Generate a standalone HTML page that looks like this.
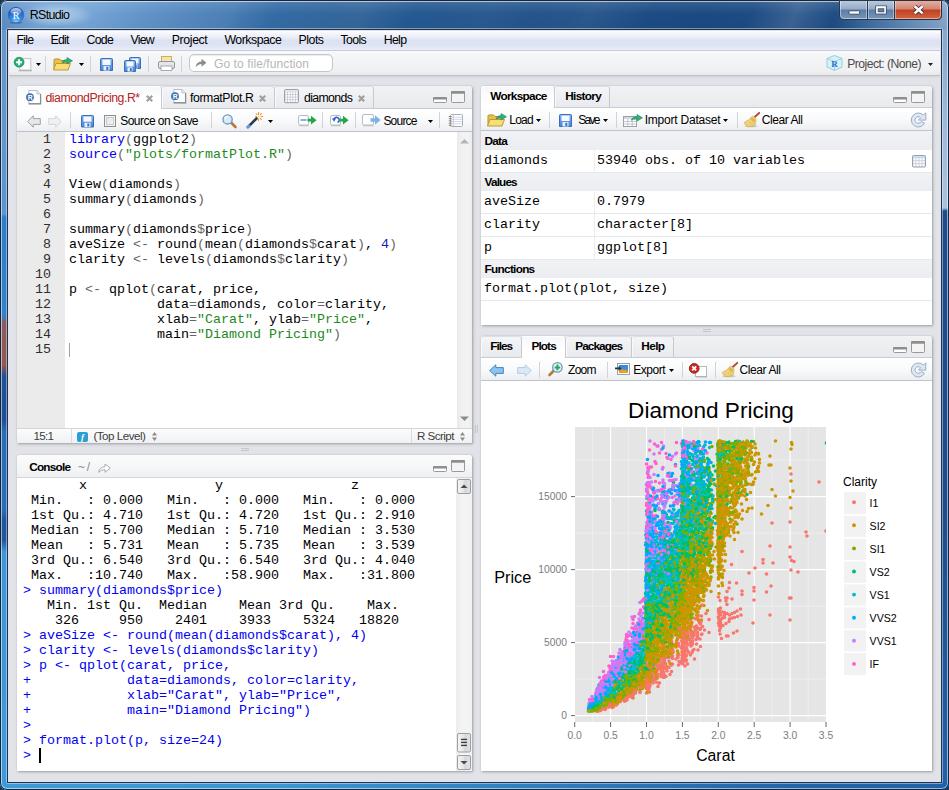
<!DOCTYPE html>
<html><head><meta charset="utf-8">
<style>
*{box-sizing:border-box;margin:0;padding:0}
html,body{width:949px;height:790px;overflow:hidden;background:#1d3552}
body{font-family:"Liberation Sans",sans-serif;font-size:12px;color:#000;position:relative}
.m{position:absolute;font-family:"Liberation Mono",monospace;font-size:13.33px;line-height:15px;white-space:pre;letter-spacing:0}
.kw{color:#0000f0}.st{color:#1d8a1d}.nu{color:#1a1ab8}.op{color:#666}.pr{color:#686868}
.cin{color:#0000f2}
</style></head><body>
<div id="frame" style="position:absolute;left:0;top:0;width:949px;height:790px;border-radius:7px;overflow:hidden;background:#2565a8">
<div style="position:absolute;left:0px;top:0px;width:949px;height:30px;background:linear-gradient(90deg,#5d8ec4 0px,#78a6d6 40px,#79a8d8 80px,#5f92c8 150px,#3a72ad 240px,#2b6199 330px,#235790 430px,#1e4f88 560px,#1b4a83 700px,#1f4d84 835px,#4a76a8 880px,#88aacf 949px)"></div>
<div style="position:absolute;left:0px;top:0px;width:949px;height:30px;background:linear-gradient(180deg,rgba(255,255,255,.30) 0,rgba(255,255,255,.10) 3px,rgba(255,255,255,0) 14px,rgba(0,0,0,.04) 30px)"></div>
<div style="position:absolute;left:150px;top:0px;width:420px;height:30px;background:linear-gradient(115deg,rgba(255,255,255,0) 0,rgba(255,255,255,.07) 20%,rgba(255,255,255,0) 30%,rgba(255,255,255,.06) 50%,rgba(255,255,255,0) 62%,rgba(255,255,255,.04) 80%,rgba(255,255,255,0) 100%)"></div>
<div style="position:absolute;left:745px;top:0px;width:100px;height:30px;background:linear-gradient(115deg,rgba(255,255,255,0) 10%,rgba(255,255,255,.13) 50%,rgba(255,255,255,0) 85%)"></div>
<div style="position:absolute;left:520px;top:0px;width:140px;height:30px;background:linear-gradient(115deg,rgba(255,255,255,0) 10%,rgba(255,255,255,.06) 50%,rgba(255,255,255,0) 90%)"></div>
<div style="position:absolute;left:0px;top:30px;width:8px;height:760px;background:linear-gradient(180deg,#6a97c8 0,#6496cb 100px,#5c94cf 184px,#2b7fca 187px,#2f82cc 285px,#8a5c5e 293px,#935850 335px,#1f5298 346px,#1d4f96 390px,#2a6cb6 402px,#2a6cb6 480px,#20569c 490px,#20569c 510px,#3a98d8 522px,#3d9ad8 752px)"></div>
<div style="position:absolute;left:941px;top:30px;width:8px;height:760px;background:linear-gradient(180deg,#84a7cf 0,#a0bbda 100px,#a8c2de 178px,#1d4c8c 181px,#1d4c8c 480px,#2161a8 752px)"></div>
<div style="position:absolute;left:0px;top:782px;width:949px;height:8px;background:linear-gradient(90deg,#3d9ad8 0,#3a96d4 280px,#2d7cc0 560px,#2363aa 800px,#2161a8 949px)"></div>
<div style="position:absolute;left:6px;top:28px;width:937px;height:756px;border:1px solid rgba(255,255,255,.42);border-radius:2px"></div>
<div style="position:absolute;left:7px;top:29px;width:935px;height:754px;border:1px solid #1f3350;background:#e2e3e8"></div>
<div style="position:absolute;left:0px;top:0px;width:949px;height:790px;border:1px solid #14263d;border-radius:7px;box-shadow:inset 0 0 0 1px rgba(255,255,255,.55)"></div>
</div>
<svg style="position:absolute;left:8px;top:7px;overflow:visible" width="16" height="16" viewBox="0 0 16 16" ><defs><radialGradient id="sph" cx=".5" cy=".95" r=".95"><stop offset="0" stop-color="#7fd2fa"/><stop offset=".35" stop-color="#3b92e6"/><stop offset=".75" stop-color="#1d5cc6"/><stop offset="1" stop-color="#16469e"/></radialGradient>
<linearGradient id="sph2" x1="0" y1="0" x2="0" y2="1"><stop offset="0" stop-color="#fff" stop-opacity=".75"/><stop offset="1" stop-color="#fff" stop-opacity=".08"/></linearGradient></defs>
<ellipse cx="8" cy="15.6" rx="6.5" ry="1.2" fill="#1c3050" opacity=".35"/>
<circle cx="8" cy="8" r="7.8" fill="url(#sph)" stroke="#2258b0" stroke-width=".5"/><ellipse cx="8" cy="4.6" rx="5.6" ry="3.6" fill="url(#sph2)"/>
<text x="8" y="11.8" font-size="10" fill="#fff" text-anchor="middle" font-family="Liberation Serif, serif">R</text></svg>
<div style="position:absolute;left:22px;top:4px;width:70px;height:22px;background:radial-gradient(ellipse at center,rgba(255,255,255,.45) 0,rgba(255,255,255,.25) 40%,rgba(255,255,255,0) 75%)"></div>
<div style="position:absolute;left:29.70px;top:5px;font-size:12.4px;line-height:20px;letter-spacing:-0.636px;color:#000;white-space:pre;">RStudio</div>
<svg style="position:absolute;left:839px;top:0px;overflow:visible" width="103" height="21" viewBox="0 0 103 21" ><defs>
<linearGradient id="wb" x1="0" y1="0" x2="0" y2="1"><stop offset="0" stop-color="#bccbdd"/><stop offset=".45" stop-color="#94abc8"/><stop offset=".5" stop-color="#5c7da6"/><stop offset="1" stop-color="#7797bc"/></linearGradient>
<linearGradient id="wc" x1="0" y1="0" x2="0" y2="1"><stop offset="0" stop-color="#e0b2a8"/><stop offset=".45" stop-color="#d38672"/><stop offset=".5" stop-color="#c13f1f"/><stop offset="1" stop-color="#d06a48"/></linearGradient></defs>
<path d="M.5 .5V15Q.5 19.5 5 19.5H98Q102.5 19.5 102.5 15V.5Z" fill="url(#wb)" stroke="#27384f" stroke-width="1"/>
<path d="M55.5 .5V19.5H98Q102.5 19.5 102.5 15V.5Z" fill="url(#wc)" stroke="#3a2a34" stroke-width="1"/>
<path d="M1.5 1V15Q1.5 18.5 5 18.5H98Q101.5 18.5 101.5 15V1" fill="none" stroke="rgba(255,255,255,.45)" stroke-width="1"/>
<path d="M28.5 0V19.5M55.5 0V19.5" stroke="#27384f" stroke-width="1"/><path d="M29.5 1V18.5M27.5 1V18.5M54.5 1V18.5M56.5 1V18.5" stroke="rgba(255,255,255,.4)" stroke-width="1"/>
<rect x="10" y="10.8" width="10.6" height="3.4" rx=".6" fill="#fff" stroke="#3d4f68" stroke-width="1"/>
<rect x="36.2" y="5.4" width="11.6" height="9" rx=".8" fill="#3d4f68"/><rect x="37.1" y="6.2" width="9.8" height="7.4" fill="#fff"/><rect x="39.2" y="8.8" width="5.6" height="3" fill="#6484ac" stroke="#3d4f68" stroke-width=".9"/>
<path d="M75.6 6.2L83.6 13.4M83.6 6.2L75.6 13.4" stroke="#4a3038" stroke-width="4.2"/><path d="M75.6 6.2L83.6 13.4M83.6 6.2L75.6 13.4" stroke="#fff" stroke-width="2.5"/></svg>
<div style="position:absolute;left:9px;top:31px;width:931px;height:20px;background:linear-gradient(180deg,#fdfdff 0,#f3f4fb 3px,#e9ecf8 7px,#dde2f3 9px,#dee3f3 14px,#e8ebf7 18px,#f0f1f9 20px)"></div>
<div style="position:absolute;left:9px;top:50px;width:931px;height:1px;background:#c7cad8"></div>
<div style="position:absolute;left:16.40px;top:30px;font-size:12.3px;line-height:20px;letter-spacing:-0.707px;color:#000;white-space:pre;">File</div>
<div style="position:absolute;left:50.50px;top:30px;font-size:12.3px;line-height:20px;letter-spacing:-0.732px;color:#000;white-space:pre;">Edit</div>
<div style="position:absolute;left:86.60px;top:30px;font-size:12.3px;line-height:20px;letter-spacing:-0.735px;color:#000;white-space:pre;">Code</div>
<div style="position:absolute;left:130.40px;top:30px;font-size:12.3px;line-height:20px;letter-spacing:-0.713px;color:#000;white-space:pre;">View</div>
<div style="position:absolute;left:171.80px;top:30px;font-size:12.3px;line-height:20px;letter-spacing:-0.380px;color:#000;white-space:pre;">Project</div>
<div style="position:absolute;left:224.40px;top:30px;font-size:12.3px;line-height:20px;letter-spacing:-0.475px;color:#000;white-space:pre;">Workspace</div>
<div style="position:absolute;left:298.50px;top:30px;font-size:12.3px;line-height:20px;letter-spacing:-0.461px;color:#000;white-space:pre;">Plots</div>
<div style="position:absolute;left:340.60px;top:30px;font-size:12.3px;line-height:20px;letter-spacing:-0.654px;color:#000;white-space:pre;">Tools</div>
<div style="position:absolute;left:383.70px;top:30px;font-size:12.3px;line-height:20px;letter-spacing:-0.666px;color:#000;white-space:pre;">Help</div>
<div style="position:absolute;left:9px;top:51px;width:931px;height:24px;background:linear-gradient(180deg,#f9f9fa 0,#f3f4f6 8px,#eff0f2 20px,#e6e7ea 24px)"></div>
<div style="position:absolute;left:9px;top:75px;width:931px;height:1px;background:#bfc1c7"></div>
<div style="position:absolute;left:9px;top:76px;width:931px;height:4px;background:linear-gradient(180deg,#d2d4d9,#dddfe3 50%,#e2e3e8)"></div>
<svg style="position:absolute;left:14px;top:56px;overflow:visible" width="18" height="15" viewBox="0 0 18 15" ><rect x="5.8" y="2.6" width="11" height="11.4" fill="#fdfdfe" stroke="#c0c4cc" stroke-width="1"/><path d="M4.5 14.8H18" stroke="#667" stroke-width="1" opacity=".45"/>
<circle cx="5.1" cy="6.2" r="4.9" fill="#22ae74" stroke="#169060" stroke-width=".8"/><path d="M5.1 3.2V9.2M2.1 6.2H8.1" stroke="#fff" stroke-width="2"/></svg>
<svg style="position:absolute;left:36px;top:63px;overflow:visible" width="5" height="3" viewBox="0 0 5 3" ><path d="M0 0H5L2.5 3Z" fill="#000"/></svg>
<div style="position:absolute;left:45px;top:56px;width:1px;height:16px;background:#d0d3d8"></div>
<svg style="position:absolute;left:53px;top:57px;overflow:visible" width="20" height="14" viewBox="0 0 20 14" ><path d="M1 4.5V12.5H15V3.5H8L6.5 2H2Q1 2 1 3Z" fill="#e8c04a" stroke="#b8902a" stroke-width="1"/>
<path d="M0.5 13L3 6.5H17.5L15 13Z" fill="#f8de7a" stroke="#c09a30" stroke-width="1"/>
<path d="M9 6Q10 2.5 14 2.5V0.5L19.5 3.8L14 7V5Q11 5 9 6Z" fill="#2fae78" stroke="#1d8a5a" stroke-width=".6"/></svg>
<svg style="position:absolute;left:79px;top:63px;overflow:visible" width="5" height="3" viewBox="0 0 5 3" ><path d="M0 0H5L2.5 3Z" fill="#000"/></svg>
<div style="position:absolute;left:90px;top:56px;width:1px;height:16px;background:#d0d3d8"></div>
<svg style="position:absolute;left:100px;top:58px;overflow:visible" width="13" height="13" viewBox="0 0 13 13" ><defs><linearGradient id="fl100_58" x1="0" y1="0" x2="0" y2="1"><stop offset="0" stop-color="#7fb0ee"/><stop offset="1" stop-color="#4a86d6"/></linearGradient></defs>
<path d="M0.5 1.5Q0.5 .5 1.5 .5H11.5Q12.5 .5 12.5 1.5V12.5H0.5Z" fill="url(#fl100_58)" stroke="#3c6cba" stroke-width="1"/>
<rect x="2.5" y="1.5" width="8" height="5.5" fill="#f4f8ff"/>
<rect x="3.5" y="8.1" width="6" height="4.4" fill="#e8f0fc"/><rect x="6.3" y="8.8" width="2" height="3.2" fill="#3a74c8"/></svg>
<svg style="position:absolute;left:129px;top:57px;overflow:visible" width="12" height="12" viewBox="0 0 12 12" ><defs><linearGradient id="fl129_57" x1="0" y1="0" x2="0" y2="1"><stop offset="0" stop-color="#7fb0ee"/><stop offset="1" stop-color="#4a86d6"/></linearGradient></defs>
<path d="M0.5 1.5Q0.5 .5 1.5 .5H10.5Q11.5 .5 11.5 1.5V11.5H0.5Z" fill="url(#fl129_57)" stroke="#3c6cba" stroke-width="1"/>
<rect x="2.5" y="1.5" width="7" height="5.0" fill="#f4f8ff"/>
<rect x="3.5" y="7.4" width="5" height="4.1" fill="#e8f0fc"/><rect x="5.8" y="8.2" width="2" height="2.8" fill="#3a74c8"/></svg>
<svg style="position:absolute;left:124px;top:60px;overflow:visible" width="12" height="12" viewBox="0 0 12 12" ><defs><linearGradient id="fl124_60" x1="0" y1="0" x2="0" y2="1"><stop offset="0" stop-color="#7fb0ee"/><stop offset="1" stop-color="#4a86d6"/></linearGradient></defs>
<path d="M0.5 1.5Q0.5 .5 1.5 .5H10.5Q11.5 .5 11.5 1.5V11.5H0.5Z" fill="url(#fl124_60)" stroke="#3c6cba" stroke-width="1"/>
<rect x="2.5" y="1.5" width="7" height="5.0" fill="#f4f8ff"/>
<rect x="3.5" y="7.4" width="5" height="4.1" fill="#e8f0fc"/><rect x="5.8" y="8.2" width="2" height="2.8" fill="#3a74c8"/></svg>
<div style="position:absolute;left:148px;top:56px;width:1px;height:16px;background:#d0d3d8"></div>
<svg style="position:absolute;left:158px;top:56px;overflow:visible" width="17" height="15" viewBox="0 0 17 15" ><rect x="3.5" y=".5" width="10" height="6" fill="#f5e6a8" stroke="#c8b060" stroke-width="1"/>
<rect x=".5" y="5.5" width="16" height="7" rx="1.5" fill="#e4e6ec" stroke="#9096a4" stroke-width="1"/><rect x="3" y="10" width="11" height="4.5" fill="#fff" stroke="#9096a4" stroke-width=".8"/></svg>
<div style="position:absolute;left:181px;top:56px;width:1px;height:16px;background:#d0d3d8"></div>
<div style="position:absolute;left:189px;top:54px;width:144px;height:18px;background:#fff;border:1px solid #c3c6cc;border-radius:5px;box-shadow:inset 0 1px 1px rgba(0,0,0,.08)"></div>
<svg style="position:absolute;left:195px;top:58px;overflow:visible" width="12" height="10" viewBox="0 0 12 10" ><path d="M.5 9.5Q1 4 6.5 3.6V.8L11.5 4.8L6.5 8.8V6Q3 6 .5 9.5Z" fill="#8c8c8c"/></svg>
<div style="position:absolute;left:214.00px;top:54px;font-size:12px;line-height:20px;letter-spacing:0.090px;color:#b6b6b6;white-space:pre;">Go to file/function</div>
<svg style="position:absolute;left:826px;top:55px;overflow:visible" width="17" height="16" viewBox="0 0 17 16" ><path d="M8.5 .5L16 3.5V12L8.5 15.5L1 12V3.5Z" fill="#d9f1f8" stroke="#8fcfe0" stroke-width="1"/><path d="M1 3.5L8.5 6.5L16 3.5M8.5 6.5V15.5" stroke="#8fcfe0" stroke-width=".8" fill="none"/>
<text x="8.5" y="11.5" font-size="9" font-weight="bold" fill="#2a6fd0" text-anchor="middle" font-family="Liberation Serif, serif">R</text></svg>
<div style="position:absolute;left:847.20px;top:54px;font-size:12.2px;line-height:20px;letter-spacing:-0.546px;color:#4e4a48;white-space:pre;">Project: (None)</div>
<svg style="position:absolute;left:928px;top:63px;overflow:visible" width="5" height="3" viewBox="0 0 5 3" ><path d="M0 0H5L2.5 3Z" fill="#222"/></svg>
<div style="position:absolute;left:17px;top:86px;width:455px;height:357px;background:#fff;border-radius:3px 3px 0 0;box-shadow:1px 1px 3px rgba(0,0,0,.30),0 0 1px rgba(0,0,0,.22)"></div>
<div style="position:absolute;left:17px;top:86px;width:455px;height:23px;background:linear-gradient(180deg,#f1f2f4 0,#e9eaed 100%);border-radius:3px 3px 0 0;border-bottom:1px solid #c9ccd2"></div>
<div style="position:absolute;left:17px;top:86px;width:145px;height:23px;background:linear-gradient(180deg,#f6f7f8 0,#ffffff 60%);border-radius:3px 3px 0 0;border-right:1px solid #c6c9cf;box-shadow:inset 0 1px 0 #fff"></div>
<div style="position:absolute;left:162px;top:86px;width:113px;height:22px;background:linear-gradient(180deg,#f4f5f7 0,#e8eaed 100%);border-radius:3px 3px 0 0;border-right:1px solid #c6c9cf;border-top:1px solid #dcdfe3;box-shadow:inset 1px 0 0 #fafafa"></div>
<div style="position:absolute;left:275px;top:86px;width:99px;height:22px;background:linear-gradient(180deg,#f4f5f7 0,#e8eaed 100%);border-radius:3px 3px 0 0;border-right:1px solid #c6c9cf;border-top:1px solid #dcdfe3;box-shadow:inset 1px 0 0 #fafafa"></div>
<svg style="position:absolute;left:26px;top:89.3px;overflow:visible" width="16" height="16" viewBox="0 0 16 16" ><path d="M2.9 1.5H11L14.4 4.9V14.6H2.9Z" fill="#fff" stroke="#b9bcc2" stroke-width="1"/><path d="M11 1.5V4.9H14.4" fill="#f2f2f2" stroke="#b0b3b9" stroke-width=".9"/>
<path d="M2.6 14.9H14.7V5.2" fill="none" stroke="#7f8690" stroke-width="1.1"/>
<circle cx="4.0" cy="8.2" r="3.9" fill="#3f72b8"/>
<text x="4.1" y="10.7" font-size="6.8" font-weight="bold" fill="#fff" text-anchor="middle" font-family="Liberation Sans, sans-serif">R</text></svg>
<div style="position:absolute;left:45.40px;top:88px;font-size:12.3px;line-height:20px;letter-spacing:-0.442px;color:#b32424;white-space:pre;">diamondPricing.R*</div>
<svg style="position:absolute;left:145.5px;top:94.8px;overflow:visible" width="7" height="7" viewBox="0 0 7 7" ><path d="M.8 .8L6.2 6.2M6.2 .8L.8 6.2" stroke="#a0a0a0" stroke-width="2.2"/></svg>
<svg style="position:absolute;left:171px;top:88.2px;overflow:visible" width="16" height="16" viewBox="0 0 16 16" ><path d="M2.9 1.5H11L14.4 4.9V14.6H2.9Z" fill="#fff" stroke="#b9bcc2" stroke-width="1"/><path d="M11 1.5V4.9H14.4" fill="#f2f2f2" stroke="#b0b3b9" stroke-width=".9"/>
<path d="M2.6 14.9H14.7V5.2" fill="none" stroke="#7f8690" stroke-width="1.1"/>
<circle cx="4.0" cy="8.2" r="3.9" fill="#3f72b8"/>
<text x="4.1" y="10.7" font-size="6.8" font-weight="bold" fill="#fff" text-anchor="middle" font-family="Liberation Sans, sans-serif">R</text></svg>
<div style="position:absolute;left:190.00px;top:88px;font-size:12.3px;line-height:20px;letter-spacing:-0.414px;color:#000;white-space:pre;">formatPlot.R</div>
<svg style="position:absolute;left:258.5px;top:94.8px;overflow:visible" width="7" height="7" viewBox="0 0 7 7" ><path d="M.8 .8L6.2 6.2M6.2 .8L.8 6.2" stroke="#a0a0a0" stroke-width="2.2"/></svg>
<svg style="position:absolute;left:284.4px;top:89.3px;overflow:visible" width="15" height="14.2" viewBox="0 0 15 14.2" ><rect x=".5" y=".5" width="14" height="13.2" rx="1" fill="#c3c8d2" stroke="#9aa0ae" stroke-width="1"/><rect x="1" y="1" width="13" height="1.8" fill="#e4e7ec"/><rect x="1.40" y="3.20" width="1.80" height="1.85" fill="#fff"/><rect x="4.00" y="3.20" width="1.80" height="1.85" fill="#fff"/><rect x="6.60" y="3.20" width="1.80" height="1.85" fill="#fff"/><rect x="9.20" y="3.20" width="1.80" height="1.85" fill="#fff"/><rect x="11.80" y="3.20" width="1.80" height="1.85" fill="#fff"/><rect x="1.40" y="5.85" width="1.80" height="1.85" fill="#fff"/><rect x="4.00" y="5.85" width="1.80" height="1.85" fill="#fff"/><rect x="6.60" y="5.85" width="1.80" height="1.85" fill="#fff"/><rect x="9.20" y="5.85" width="1.80" height="1.85" fill="#fff"/><rect x="11.80" y="5.85" width="1.80" height="1.85" fill="#fff"/><rect x="1.40" y="8.50" width="1.80" height="1.85" fill="#fff"/><rect x="4.00" y="8.50" width="1.80" height="1.85" fill="#fff"/><rect x="6.60" y="8.50" width="1.80" height="1.85" fill="#fff"/><rect x="9.20" y="8.50" width="1.80" height="1.85" fill="#fff"/><rect x="11.80" y="8.50" width="1.80" height="1.85" fill="#fff"/><rect x="1.40" y="11.15" width="1.80" height="1.85" fill="#fff"/><rect x="4.00" y="11.15" width="1.80" height="1.85" fill="#fff"/><rect x="6.60" y="11.15" width="1.80" height="1.85" fill="#fff"/><rect x="9.20" y="11.15" width="1.80" height="1.85" fill="#fff"/><rect x="11.80" y="11.15" width="1.80" height="1.85" fill="#fff"/></svg>
<div style="position:absolute;left:304.00px;top:88px;font-size:12.3px;line-height:20px;letter-spacing:-0.633px;color:#000;white-space:pre;">diamonds</div>
<svg style="position:absolute;left:358px;top:94.8px;overflow:visible" width="7" height="7" viewBox="0 0 7 7" ><path d="M.8 .8L6.2 6.2M6.2 .8L.8 6.2" stroke="#a0a0a0" stroke-width="2.2"/></svg>
<svg style="position:absolute;left:433px;top:97px;overflow:visible" width="14" height="6" viewBox="0 0 14 6" ><rect x=".5" y=".5" width="13" height="5" rx="1" fill="#fff" stroke="#999" stroke-width="1"/><rect x="0" y="0" width="14" height="2.6" rx="1" fill="#8e8e8e"/></svg>
<svg style="position:absolute;left:451px;top:91px;overflow:visible" width="14" height="12" viewBox="0 0 14 12" ><rect x=".5" y=".5" width="13" height="11" rx="1" fill="#f4f4f5" stroke="#999" stroke-width="1"/><rect x="0" y="0" width="14" height="2.8" rx="1" fill="#8e8e8e"/></svg>
<div style="position:absolute;left:17px;top:109px;width:455px;height:23px;background:linear-gradient(180deg,#ffffff 0,#f9fafb 50%,#eceef1 100%);border-bottom:1px solid #bfc3cb"></div>
<svg style="position:absolute;left:27px;top:114.8px;overflow:visible" width="14" height="13" viewBox="0 0 14 13" ><path d="M.7 6.5L6.3 .8V3.6H13.3V9.4H6.3V12.2Z" fill="#e6e8eb" stroke="#9ca2aa" stroke-width="1" stroke-linejoin="round"/></svg>
<svg style="position:absolute;left:48px;top:114.8px;overflow:visible" width="14" height="13" viewBox="0 0 14 13" ><path d="M13.3 6.5L7.7 .8V3.6H.7V9.4H7.7V12.2Z" fill="#eff0f2" stroke="#d3d6da" stroke-width="1" stroke-linejoin="round"/></svg>
<div style="position:absolute;left:70px;top:112px;width:1px;height:16px;background:#d0d3d8"></div>
<svg style="position:absolute;left:80.5px;top:115px;overflow:visible" width="13" height="12.5" viewBox="0 0 13 12.5" ><defs><linearGradient id="fl80_5_115" x1="0" y1="0" x2="0" y2="1"><stop offset="0" stop-color="#7fb0ee"/><stop offset="1" stop-color="#4a86d6"/></linearGradient></defs>
<path d="M0.5 1.5Q0.5 .5 1.5 .5H11.5Q12.5 .5 12.5 1.5V12.0H0.5Z" fill="url(#fl80_5_115)" stroke="#3c6cba" stroke-width="1"/>
<rect x="2.5" y="1.5" width="8" height="5.2" fill="#f4f8ff"/>
<rect x="3.5" y="7.8" width="6" height="4.2" fill="#e8f0fc"/><rect x="6.3" y="8.5" width="2" height="3.0" fill="#3a74c8"/></svg>
<div style="position:absolute;left:104px;top:115px;width:12px;height:12px;border:1px solid #8e8f8f;background:linear-gradient(135deg,#dfe0e2 0,#f7f7f8 100%);box-shadow:inset 0 0 0 1px #f4f4f4, inset 0 0 0 2px #c9cbce"></div>
<div style="position:absolute;left:120.30px;top:111px;font-size:12px;line-height:20px;letter-spacing:-0.553px;color:#000;white-space:pre;">Source on Save</div>
<div style="position:absolute;left:211px;top:112px;width:1px;height:16px;background:#d0d3d8"></div>
<svg style="position:absolute;left:222px;top:114px;overflow:visible" width="15" height="14" viewBox="0 0 15 14" ><path d="M9 8.5L13.5 13" stroke="#b8783a" stroke-width="2.6" stroke-linecap="round"/><path d="M8.6 8.1L10 9.5" stroke="#888" stroke-width="2.2"/>
<circle cx="5.6" cy="5.4" r="4.6" fill="#d6ecfa" stroke="#6f94b8" stroke-width="1.3"/><path d="M2.8 4.6A3 3 0 0 1 6 2.4" stroke="#fff" stroke-width="1.2" fill="none"/></svg>
<svg style="position:absolute;left:246px;top:112px;overflow:visible" width="18" height="16" viewBox="0 0 18 16" ><path d="M2 15L10.5 6.5" stroke="#2b3a4a" stroke-width="2.6" stroke-linecap="round"/><path d="M1.6 15.4L3.2 13.8" stroke="#5aa0e0" stroke-width="2.6" stroke-linecap="round"/>
<path d="M12.5 0V3M12.5 6.5V9M9 4.5H11M14.5 4.5H17M10 1.5L11.3 3M14 6L15.6 7.8M15.5 1.2L14 3" stroke="#f09030" stroke-width="1.1"/><circle cx="12.5" cy="4.6" r="1" fill="#ffd860"/></svg>
<svg style="position:absolute;left:268px;top:120px;overflow:visible" width="5" height="3" viewBox="0 0 5 3" ><path d="M0 0H5L2.5 3Z" fill="#000"/></svg>
<svg style="position:absolute;left:297.5px;top:115px;overflow:visible" width="19" height="11" viewBox="0 0 19 11" ><rect x=".5" y=".5" width="10" height="9.5" rx="1.5" fill="#fff" stroke="#b9bcc4" stroke-width="1"/><path d="M1 10.8H11" stroke="#999" stroke-width=".8" opacity=".6"/>
<rect x="2.5" y="4" width="6" height="2" fill="#8ab0e8"/><path d="M9.5 3.8H13V.8L18.6 5.2L13 9.6V6.6H9.5Z" fill="#22a84a"/></svg>
<div style="position:absolute;left:321.5px;top:112px;width:1px;height:16px;background:#d0d3d8"></div>
<svg style="position:absolute;left:330px;top:115px;overflow:visible" width="19" height="11" viewBox="0 0 19 11" ><rect x=".5" y=".5" width="10" height="9.5" rx="1.5" fill="#fff" stroke="#b9bcc4" stroke-width="1"/><path d="M1 10.8H11" stroke="#999" stroke-width=".8" opacity=".6"/>
<path d="M7.6 7.4A2.6 2.6 0 1 0 4 4.6" fill="none" stroke="#2a62d8" stroke-width="1.6"/><path d="M1.8 3.6L4.2 6.8L6 3.2Z" fill="#2a62d8"/><path d="M9.5 3.8H13V.8L18.6 5.2L13 9.6V6.6H9.5Z" fill="#22a84a"/></svg>
<div style="position:absolute;left:354.5px;top:112px;width:1px;height:16px;background:#d0d3d8"></div>
<svg style="position:absolute;left:362px;top:114px;overflow:visible" width="19" height="12" viewBox="0 0 19 12" ><rect x=".5" y=".5" width="11" height="10.5" rx="1.5" fill="#fff" stroke="#b9bcc4" stroke-width="1"/><path d="M1 11.8H12" stroke="#999" stroke-width=".8" opacity=".6"/>
<path d="M8.5 4.3H13V1.2L18.6 6L13 10.8V7.7H8.5Z" fill="#7fb2e6"/></svg>
<div style="position:absolute;left:383.40px;top:111px;font-size:12px;line-height:20px;letter-spacing:-0.784px;color:#000;white-space:pre;">Source</div>
<svg style="position:absolute;left:428px;top:120px;overflow:visible" width="5" height="3" viewBox="0 0 5 3" ><path d="M0 0H5L2.5 3Z" fill="#000"/></svg>
<div style="position:absolute;left:438.5px;top:112px;width:1px;height:16px;background:#d0d3d8"></div>
<svg style="position:absolute;left:448px;top:113.5px;overflow:visible" width="15" height="13" viewBox="0 0 15 13" ><rect x="2.5" y=".5" width="12" height="12" rx="1" fill="#fff" stroke="#a9adb6" stroke-width="1"/><path d="M5.2 1V12" stroke="#e8a0a0" stroke-width=".7"/>
<path d="M3.5 3.2H14M3.5 5.4H14M3.5 7.6H14M3.5 9.8H14" stroke="#b8c8e8" stroke-width=".7"/><path d="M.8 2.5H3.6M.8 4.7H3.6M.8 6.9H3.6M.8 9.1H3.6M.8 11.2H3.6" stroke="#7a7a7a" stroke-width="1"/></svg>
<div style="position:absolute;left:17px;top:132px;width:48px;height:296px;background:#ebebeb"></div>
<div style="position:absolute;left:457px;top:132px;width:15px;height:296px;background:linear-gradient(90deg,#e9e9ea 0,#f1f1f2 30%,#f3f3f4 70%,#ececed 100%)"></div>
<svg style="position:absolute;left:460px;top:139px;overflow:visible" width="9" height="5" viewBox="0 0 9 5" ><path d="M0 4.5L4.5 0L9 4.5Z" fill="#b4b4b4"/></svg>
<svg style="position:absolute;left:460px;top:416px;overflow:visible" width="9" height="5" viewBox="0 0 9 5" ><path d="M0 .5L4.5 5L9 .5Z" fill="#8c8c8c"/></svg>
<div class="m" style="left:17px;top:132px;width:34px;text-align:right;color:#2e2e2e">1</div>
<div class="m" style="left:69px;top:132px"><span class="kw">library</span><span class="pr">(</span>ggplot2<span class="pr">)</span></div>
<div class="m" style="left:17px;top:147px;width:34px;text-align:right;color:#2e2e2e">2</div>
<div class="m" style="left:69px;top:147px"><span class="kw">source</span><span class="pr">(</span><span class="st">"plots/formatPlot.R"</span><span class="pr">)</span></div>
<div class="m" style="left:17px;top:162px;width:34px;text-align:right;color:#2e2e2e">3</div>
<div class="m" style="left:17px;top:177px;width:34px;text-align:right;color:#2e2e2e">4</div>
<div class="m" style="left:69px;top:177px">View<span class="pr">(</span>diamonds<span class="pr">)</span></div>
<div class="m" style="left:17px;top:192px;width:34px;text-align:right;color:#2e2e2e">5</div>
<div class="m" style="left:69px;top:192px">summary<span class="pr">(</span>diamonds<span class="pr">)</span></div>
<div class="m" style="left:17px;top:207px;width:34px;text-align:right;color:#2e2e2e">6</div>
<div class="m" style="left:17px;top:222px;width:34px;text-align:right;color:#2e2e2e">7</div>
<div class="m" style="left:69px;top:222px">summary<span class="pr">(</span>diamonds<span class="op">$</span>price<span class="pr">)</span></div>
<div class="m" style="left:17px;top:237px;width:34px;text-align:right;color:#2e2e2e">8</div>
<div class="m" style="left:69px;top:237px">aveSize <span class="op">&lt;-</span> round<span class="pr">(</span>mean<span class="pr">(</span>diamonds<span class="op">$</span>carat<span class="pr">)</span>, <span class="nu">4</span><span class="pr">)</span></div>
<div class="m" style="left:17px;top:252px;width:34px;text-align:right;color:#2e2e2e">9</div>
<div class="m" style="left:69px;top:252px">clarity <span class="op">&lt;-</span> levels<span class="pr">(</span>diamonds<span class="op">$</span>clarity<span class="pr">)</span></div>
<div class="m" style="left:17px;top:267px;width:34px;text-align:right;color:#2e2e2e">10</div>
<div class="m" style="left:17px;top:282px;width:34px;text-align:right;color:#2e2e2e">11</div>
<div class="m" style="left:69px;top:282px">p <span class="op">&lt;-</span> qplot<span class="pr">(</span>carat, price,</div>
<div class="m" style="left:17px;top:297px;width:34px;text-align:right;color:#2e2e2e">12</div>
<div class="m" style="left:69px;top:297px">           data<span class="op">=</span>diamonds, color<span class="op">=</span>clarity,</div>
<div class="m" style="left:17px;top:312px;width:34px;text-align:right;color:#2e2e2e">13</div>
<div class="m" style="left:69px;top:312px">           xlab<span class="op">=</span><span class="st">"Carat"</span>, ylab<span class="op">=</span><span class="st">"Price"</span>,</div>
<div class="m" style="left:17px;top:327px;width:34px;text-align:right;color:#2e2e2e">14</div>
<div class="m" style="left:69px;top:327px">           main<span class="op">=</span><span class="st">"Diamond Pricing"</span><span class="pr">)</span></div>
<div class="m" style="left:17px;top:342px;width:34px;text-align:right;color:#2e2e2e">15</div>
<div style="position:absolute;left:69px;top:343px;width:1px;height:14px;background:#a0a0a0"></div>
<div style="position:absolute;left:17px;top:428px;width:455px;height:15px;background:linear-gradient(180deg,#fcfcfd,#f0f1f3);border-top:1px solid #d4d6da"></div>
<div style="position:absolute;left:33.60px;top:426px;font-size:11.6px;line-height:20px;letter-spacing:-0.759px;color:#3c3c3c;white-space:pre;">15:1</div>
<div style="position:absolute;left:71px;top:429px;width:1px;height:14px;background:#d9dbde"></div>
<svg style="position:absolute;left:77px;top:431.5px;overflow:visible" width="11" height="10" viewBox="0 0 11 10" ><rect width="11" height="10" rx="2" fill="#2b9fd4"/><text x="5.5" y="8.2" font-size="9" font-style="italic" font-weight="bold" fill="#fff" text-anchor="middle" font-family="Liberation Serif, serif">f</text></svg>
<div style="position:absolute;left:93.40px;top:426px;font-size:11.6px;line-height:20px;letter-spacing:-0.478px;color:#3c3c3c;white-space:pre;">(Top Level)</div>
<svg style="position:absolute;left:152px;top:431.5px;overflow:visible" width="5" height="9" viewBox="0 0 5 9" ><path d="M0 3.4H5L2.5 0ZM0 5.6H5L2.5 9Z" fill="#8a8a8a"/></svg>
<div style="position:absolute;left:411px;top:429px;width:1px;height:14px;background:#d9dbde"></div>
<div style="position:absolute;left:417.00px;top:426px;font-size:11.6px;line-height:20px;letter-spacing:-0.536px;color:#3c3c3c;white-space:pre;">R Script</div>
<svg style="position:absolute;left:460px;top:431.5px;overflow:visible" width="5" height="9" viewBox="0 0 5 9" ><path d="M0 3.4H5L2.5 0ZM0 5.6H5L2.5 9Z" fill="#8a8a8a"/></svg>
<div style="position:absolute;left:17px;top:455px;width:455px;height:316px;background:#fff;border-radius:3px 3px 0 0;box-shadow:1px 1px 3px rgba(0,0,0,.30),0 0 1px rgba(0,0,0,.22)"></div>
<div style="position:absolute;left:17px;top:455px;width:455px;height:23px;background:linear-gradient(180deg,#fbfbfc 0,#f5f6f7 60%,#eff0f2 100%);border-radius:3px 3px 0 0;border-bottom:1px solid #d3d5da"></div>
<div style="position:absolute;left:29.20px;top:457px;font-size:11.8px;line-height:20px;letter-spacing:-0.792px;color:#000;white-space:pre;font-weight:bold;">Console</div>
<div style="position:absolute;left:78.00px;top:457px;font-size:12px;line-height:20px;letter-spacing:1.658px;color:#8a8a8a;white-space:pre;">~/</div>
<svg style="position:absolute;left:98px;top:462.5px;overflow:visible" width="13" height="10" viewBox="0 0 13 10" ><path d="M.7 9.3Q1 4.2 7 3.8V1L12.3 5.2L7 9.3V6.6Q3 6.4 .7 9.3Z" fill="#fff" stroke="#a9acb2" stroke-width="1" stroke-linejoin="round"/></svg>
<svg style="position:absolute;left:433px;top:466px;overflow:visible" width="14" height="6" viewBox="0 0 14 6" ><rect x=".5" y=".5" width="13" height="5" rx="1" fill="#fff" stroke="#999" stroke-width="1"/><rect x="0" y="0" width="14" height="2.6" rx="1" fill="#8e8e8e"/></svg>
<svg style="position:absolute;left:451px;top:460px;overflow:visible" width="14" height="12" viewBox="0 0 14 12" ><rect x=".5" y=".5" width="13" height="11" rx="1" fill="#f4f4f5" stroke="#999" stroke-width="1"/><rect x="0" y="0" width="14" height="2.8" rx="1" fill="#8e8e8e"/></svg>
<div class="m" style="left:23px;top:478px">       x                y                z         </div>
<div class="m" style="left:23px;top:493px"> Min.   : 0.000   Min.   : 0.000   Min.   : 0.000  </div>
<div class="m" style="left:23px;top:508px"> 1st Qu.: 4.710   1st Qu.: 4.720   1st Qu.: 2.910  </div>
<div class="m" style="left:23px;top:523px"> Median : 5.700   Median : 5.710   Median : 3.530  </div>
<div class="m" style="left:23px;top:538px"> Mean   : 5.731   Mean   : 5.735   Mean   : 3.539  </div>
<div class="m" style="left:23px;top:553px"> 3rd Qu.: 6.540   3rd Qu.: 6.540   3rd Qu.: 4.040  </div>
<div class="m" style="left:23px;top:568px"> Max.   :10.740   Max.   :58.900   Max.   :31.800  </div>
<div class="m" style="left:23px;top:583px"><span class="cin">&gt; summary(diamonds$price)</span></div>
<div class="m" style="left:23px;top:598px">   Min. 1st Qu.  Median    Mean 3rd Qu.    Max. </div>
<div class="m" style="left:23px;top:613px">    326     950    2401    3933    5324   18820 </div>
<div class="m" style="left:23px;top:628px"><span class="cin">&gt; aveSize &lt;- round(mean(diamonds$carat), 4)</span></div>
<div class="m" style="left:23px;top:643px"><span class="cin">&gt; clarity &lt;- levels(diamonds$clarity)</span></div>
<div class="m" style="left:23px;top:658px"><span class="cin">&gt; p &lt;- qplot(carat, price,</span></div>
<div class="m" style="left:23px;top:673px"><span class="cin">+            data=diamonds, color=clarity,</span></div>
<div class="m" style="left:23px;top:688px"><span class="cin">+            xlab="Carat", ylab="Price",</span></div>
<div class="m" style="left:23px;top:703px"><span class="cin">+            main="Diamond Pricing")</span></div>
<div class="m" style="left:23px;top:718px"><span class="cin">&gt; </span></div>
<div class="m" style="left:23px;top:733px"><span class="cin">&gt; format.plot(p, size=24)</span></div>
<div class="m" style="left:23px;top:748px"><span class="cin">&gt; </span></div>
<div style="position:absolute;left:39px;top:748px;width:2px;height:15px;background:#000"></div>
<div style="position:absolute;left:456px;top:478px;width:16px;height:293px;background:linear-gradient(90deg,#ececed 0,#f4f4f5 40%,#f2f2f3 100%)"></div>
<svg style="position:absolute;left:456.5px;top:479px;overflow:visible" width="14" height="15" viewBox="0 0 14 15" ><defs><linearGradient id="sb479" x1="0" y1="0" x2="1" y2="0"><stop offset="0" stop-color="#f6f6f7"/><stop offset=".5" stop-color="#e4e4e6"/><stop offset=".55" stop-color="#d6d7da"/><stop offset="1" stop-color="#e2e3e6"/></linearGradient></defs><rect x=".5" y=".5" width="13" height="14" rx="1.5" fill="url(#sb479)" stroke="#9b9ea5" stroke-width="1"/><path d="M3.5 9L7 5.5L10.5 9Z" fill="#4a4a4a"/></svg>
<svg style="position:absolute;left:456.5px;top:733px;overflow:visible" width="14" height="19.5" viewBox="0 0 14 19.5" ><defs><linearGradient id="sb733" x1="0" y1="0" x2="1" y2="0"><stop offset="0" stop-color="#f6f6f7"/><stop offset=".5" stop-color="#e4e4e6"/><stop offset=".55" stop-color="#d6d7da"/><stop offset="1" stop-color="#e2e3e6"/></linearGradient></defs><rect x=".5" y=".5" width="13" height="18.5" rx="1.5" fill="url(#sb733)" stroke="#9b9ea5" stroke-width="1"/><path d="M4 6.5H10M4 9.5H10M4 12.5H10" stroke="#3c3c3c" stroke-width="1.4"/><path d="M4 7.5H10M4 10.5H10M4 13.5H10" stroke="#fff" stroke-width=".6" opacity=".7"/></svg>
<svg style="position:absolute;left:456.5px;top:754.5px;overflow:visible" width="14" height="15" viewBox="0 0 14 15" ><defs><linearGradient id="sb754_5" x1="0" y1="0" x2="1" y2="0"><stop offset="0" stop-color="#f6f6f7"/><stop offset=".5" stop-color="#e4e4e6"/><stop offset=".55" stop-color="#d6d7da"/><stop offset="1" stop-color="#e2e3e6"/></linearGradient></defs><rect x=".5" y=".5" width="13" height="14" rx="1.5" fill="url(#sb754_5)" stroke="#9b9ea5" stroke-width="1"/><path d="M3.5 6L7 9.5L10.5 6Z" fill="#4a4a4a"/></svg>
<div style="position:absolute;left:481px;top:86px;width:451px;height:239px;background:#fff;border-radius:3px 3px 0 0;box-shadow:1px 1px 3px rgba(0,0,0,.30),0 0 1px rgba(0,0,0,.22)"></div>
<div style="position:absolute;left:481px;top:86px;width:451px;height:22px;background:linear-gradient(180deg,#f1f2f4 0,#e9eaed 100%);border-radius:3px 3px 0 0;border-bottom:1px solid #c9ccd2"></div>
<div style="position:absolute;left:481px;top:86px;width:74px;height:22px;background:linear-gradient(180deg,#f6f7f8 0,#ffffff 60%);border-radius:3px 3px 0 0;border-right:1px solid #c6c9cf;box-shadow:inset 0 1px 0 #fff"></div>
<div style="position:absolute;left:555px;top:86px;width:55px;height:21px;background:linear-gradient(180deg,#f4f5f7 0,#e8eaed 100%);border-radius:3px 3px 0 0;border-right:1px solid #c6c9cf;border-top:1px solid #dcdfe3;box-shadow:inset 1px 0 0 #fafafa"></div>
<div style="position:absolute;left:490.30px;top:86px;font-size:11.8px;line-height:20px;letter-spacing:-0.718px;color:#000;white-space:pre;font-weight:bold;">Workspace</div>
<div style="position:absolute;left:565.30px;top:86px;font-size:11.8px;line-height:20px;letter-spacing:-0.709px;color:#000;white-space:pre;font-weight:bold;">History</div>
<svg style="position:absolute;left:893px;top:97px;overflow:visible" width="14" height="6" viewBox="0 0 14 6" ><rect x=".5" y=".5" width="13" height="5" rx="1" fill="#fff" stroke="#999" stroke-width="1"/><rect x="0" y="0" width="14" height="2.6" rx="1" fill="#8e8e8e"/></svg>
<svg style="position:absolute;left:911px;top:91px;overflow:visible" width="14" height="12" viewBox="0 0 14 12" ><rect x=".5" y=".5" width="13" height="11" rx="1" fill="#f4f4f5" stroke="#999" stroke-width="1"/><rect x="0" y="0" width="14" height="2.8" rx="1" fill="#8e8e8e"/></svg>
<div style="position:absolute;left:481px;top:108px;width:451px;height:23px;background:linear-gradient(180deg,#ffffff 0,#f9fafb 50%,#eceef1 100%);border-bottom:1px solid #bfc3cb"></div>
<svg style="position:absolute;left:487px;top:113px;overflow:visible" width="20" height="14" viewBox="0 0 20 14" ><path d="M1 4.5V12.5H15V3.5H8L6.5 2H2Q1 2 1 3Z" fill="#e8c04a" stroke="#b8902a" stroke-width="1"/>
<path d="M0.5 13L3 6.5H17.5L15 13Z" fill="#f8de7a" stroke="#c09a30" stroke-width="1"/>
<path d="M9 6Q10 2.5 14 2.5V0.5L19.5 3.8L14 7V5Q11 5 9 6Z" fill="#2fae78" stroke="#1d8a5a" stroke-width=".6"/></svg>
<div style="position:absolute;left:509.30px;top:110px;font-size:12px;line-height:20px;letter-spacing:-0.798px;color:#000;white-space:pre;">Load</div>
<svg style="position:absolute;left:536px;top:119px;overflow:visible" width="5" height="3" viewBox="0 0 5 3" ><path d="M0 0H5L2.5 3Z" fill="#000"/></svg>
<div style="position:absolute;left:549px;top:112px;width:1px;height:16px;background:#d0d3d8"></div>
<svg style="position:absolute;left:558.5px;top:114px;overflow:visible" width="13" height="13" viewBox="0 0 13 13" ><defs><linearGradient id="fl558_5_114" x1="0" y1="0" x2="0" y2="1"><stop offset="0" stop-color="#7fb0ee"/><stop offset="1" stop-color="#4a86d6"/></linearGradient></defs>
<path d="M0.5 1.5Q0.5 .5 1.5 .5H11.5Q12.5 .5 12.5 1.5V12.5H0.5Z" fill="url(#fl558_5_114)" stroke="#3c6cba" stroke-width="1"/>
<rect x="2.5" y="1.5" width="8" height="5.5" fill="#f4f8ff"/>
<rect x="3.5" y="8.1" width="6" height="4.4" fill="#e8f0fc"/><rect x="6.3" y="8.8" width="2" height="3.2" fill="#3a74c8"/></svg>
<div style="position:absolute;left:578.20px;top:110px;font-size:12px;line-height:20px;letter-spacing:-1.717px;color:#000;white-space:pre;">Save</div>
<svg style="position:absolute;left:603px;top:119px;overflow:visible" width="5" height="3" viewBox="0 0 5 3" ><path d="M0 0H5L2.5 3Z" fill="#000"/></svg>
<div style="position:absolute;left:616px;top:112px;width:1px;height:16px;background:#d0d3d8"></div>
<svg style="position:absolute;left:623px;top:113.5px;overflow:visible" width="20" height="13" viewBox="0 0 20 13" ><rect x=".5" y="2.5" width="13" height="10" fill="#fff" stroke="#9aa0ac" stroke-width="1"/><rect x="1" y="3" width="12" height="2" fill="#d3d7df"/>
<path d="M4.8 5V12.5M9.2 5V12.5M.5 7.5H13.5M.5 10H13.5" stroke="#b4b9c4" stroke-width=".8"/>
<path d="M8 6.2Q9.5 2.6 14 2.6V.4L19.6 3.8L14 7.2V5Q10.5 5 8 6.2Z" fill="#2fae78" stroke="#1d8a5a" stroke-width=".5"/></svg>
<div style="position:absolute;left:644.70px;top:110px;font-size:12px;line-height:20px;letter-spacing:-0.215px;color:#000;white-space:pre;">Import Dataset</div>
<svg style="position:absolute;left:723px;top:119px;overflow:visible" width="5" height="3" viewBox="0 0 5 3" ><path d="M0 0H5L2.5 3Z" fill="#000"/></svg>
<div style="position:absolute;left:736.5px;top:112px;width:1px;height:16px;background:#d0d3d8"></div>
<svg style="position:absolute;left:743.5px;top:112px;overflow:visible" width="16" height="15" viewBox="0 0 16 15" ><ellipse cx="7" cy="14.3" rx="6.5" ry="1" fill="#000" opacity=".18"/>
<path d="M15.2 .9L11 4.8" stroke="#b5533a" stroke-width="2" stroke-linecap="round"/>
<path d="M8.6 4L12 6.8Q12 10.5 11 13.2Q7 15 3.2 14.6Q1 12.8 .2 10.4Q5 8.5 8.6 4Z" fill="#efd27c" stroke="#d2ac4a" stroke-width=".7"/>
<path d="M7.4 5.6L10.9 8.3M6.6 6.6L10.6 9.6" stroke="#c89a3a" stroke-width=".8"/>
<path d="M3 11.5L5 13.5M5.5 10L8 13.5M8 8.5L9.5 12.5" stroke="#dcb658" stroke-width=".6"/></svg>
<div style="position:absolute;left:761.80px;top:110px;font-size:12px;line-height:20px;letter-spacing:-0.461px;color:#000;white-space:pre;">Clear All</div>
<svg style="position:absolute;left:911px;top:111.9px;overflow:visible" width="16" height="16" viewBox="0 0 16 16" ><path d="M12.25 3.05A7 7 0 1 0 13.48 11.28L10.21 9.55A3.3 3.3 0 1 1 9.63 5.67L7.5 8.1H14.8V.9Z" fill="#e0e7f4" stroke="#9cadc9" stroke-width="1" stroke-linejoin="round"/></svg>
<div style="position:absolute;left:481px;top:131px;width:451px;height:19px;background:linear-gradient(180deg,#f1f2f5 0,#ebedf0 100%)"></div>
<div style="position:absolute;left:484.60px;top:131px;font-size:11.8px;line-height:20px;letter-spacing:-0.792px;color:#000;white-space:pre;font-weight:bold;">Data</div>
<div style="position:absolute;left:481px;top:150px;width:451px;height:23px;background:#fff;border-bottom:1px solid #e6e8ec"></div>
<div class="m" style="left:484px;top:152.5px">diamonds</div>
<div style="position:absolute;left:594px;top:150px;width:1px;height:22px;background:#eceef1"></div>
<div class="m" style="left:597px;top:152.5px">53940 obs. of 10 variables</div>
<svg style="position:absolute;left:912px;top:154.5px;overflow:visible" width="14" height="12.5" viewBox="0 0 14 12.5" ><rect x=".5" y=".5" width="13" height="11.5" rx="1" fill="#c3c8d2" stroke="#9aa0ae" stroke-width="1"/><rect x="1" y="1" width="12" height="1.8" fill="#bfe3f8"/><rect x="1.40" y="3.20" width="2.20" height="2.17" fill="#fff"/><rect x="4.40" y="3.20" width="2.20" height="2.17" fill="#fff"/><rect x="7.40" y="3.20" width="2.20" height="2.17" fill="#fff"/><rect x="10.40" y="3.20" width="2.20" height="2.17" fill="#fff"/><rect x="1.40" y="6.17" width="2.20" height="2.17" fill="#fff"/><rect x="4.40" y="6.17" width="2.20" height="2.17" fill="#fff"/><rect x="7.40" y="6.17" width="2.20" height="2.17" fill="#fff"/><rect x="10.40" y="6.17" width="2.20" height="2.17" fill="#fff"/><rect x="1.40" y="9.13" width="2.20" height="2.17" fill="#fff"/><rect x="4.40" y="9.13" width="2.20" height="2.17" fill="#fff"/><rect x="7.40" y="9.13" width="2.20" height="2.17" fill="#fff"/><rect x="10.40" y="9.13" width="2.20" height="2.17" fill="#fff"/></svg>
<div style="position:absolute;left:481px;top:173px;width:451px;height:18px;background:linear-gradient(180deg,#f1f2f5 0,#ebedf0 100%)"></div>
<div style="position:absolute;left:484.60px;top:172px;font-size:11.8px;line-height:20px;letter-spacing:-0.859px;color:#000;white-space:pre;font-weight:bold;">Values</div>
<div style="position:absolute;left:481px;top:191px;width:451px;height:23px;background:#fff;border-bottom:1px solid #e6e8ec"></div>
<div class="m" style="left:484px;top:193.5px">aveSize</div>
<div style="position:absolute;left:594px;top:191px;width:1px;height:22px;background:#eceef1"></div>
<div class="m" style="left:597px;top:193.5px">0.7979</div>
<div style="position:absolute;left:481px;top:214px;width:451px;height:23px;background:#fff;border-bottom:1px solid #e6e8ec"></div>
<div class="m" style="left:484px;top:216.5px">clarity</div>
<div style="position:absolute;left:594px;top:214px;width:1px;height:22px;background:#eceef1"></div>
<div class="m" style="left:597px;top:216.5px">character[8]</div>
<div style="position:absolute;left:481px;top:237px;width:451px;height:23px;background:#fff;border-bottom:1px solid #e6e8ec"></div>
<div class="m" style="left:484px;top:239.5px">p</div>
<div style="position:absolute;left:594px;top:237px;width:1px;height:22px;background:#eceef1"></div>
<div class="m" style="left:597px;top:239.5px">ggplot[8]</div>
<div style="position:absolute;left:481px;top:260px;width:451px;height:18px;background:linear-gradient(180deg,#f1f2f5 0,#ebedf0 100%)"></div>
<div style="position:absolute;left:484.60px;top:259px;font-size:11.8px;line-height:20px;letter-spacing:-0.722px;color:#000;white-space:pre;font-weight:bold;">Functions</div>
<div style="position:absolute;left:481px;top:278px;width:451px;height:23px;background:#fff;border-bottom:1px solid #e6e8ec"></div>
<div class="m" style="left:484px;top:280.5px">format.plot(plot, size)</div>
<div style="position:absolute;left:481px;top:336px;width:451px;height:435px;background:#fff;border-radius:3px 3px 0 0;box-shadow:1px 1px 3px rgba(0,0,0,.30),0 0 1px rgba(0,0,0,.22)"></div>
<div style="position:absolute;left:481px;top:336px;width:451px;height:22px;background:linear-gradient(180deg,#f1f2f4 0,#e9eaed 100%);border-radius:3px 3px 0 0;border-bottom:1px solid #c9ccd2"></div>
<div style="position:absolute;left:481px;top:336px;width:40.5px;height:21px;background:linear-gradient(180deg,#f4f5f7 0,#e8eaed 100%);border-radius:3px 3px 0 0;border-right:1px solid #c6c9cf;border-top:1px solid #dcdfe3;box-shadow:inset 1px 0 0 #fafafa"></div>
<div style="position:absolute;left:521.5px;top:336px;width:44.5px;height:22px;background:linear-gradient(180deg,#f6f7f8 0,#ffffff 60%);border-radius:3px 3px 0 0;border-right:1px solid #c6c9cf;box-shadow:inset 0 1px 0 #fff"></div>
<div style="position:absolute;left:566px;top:336px;width:65.5px;height:21px;background:linear-gradient(180deg,#f4f5f7 0,#e8eaed 100%);border-radius:3px 3px 0 0;border-right:1px solid #c6c9cf;border-top:1px solid #dcdfe3;box-shadow:inset 1px 0 0 #fafafa"></div>
<div style="position:absolute;left:631.5px;top:336px;width:42.5px;height:21px;background:linear-gradient(180deg,#f4f5f7 0,#e8eaed 100%);border-radius:3px 3px 0 0;border-right:1px solid #c6c9cf;border-top:1px solid #dcdfe3;box-shadow:inset 1px 0 0 #fafafa"></div>
<div style="position:absolute;left:490.30px;top:336px;font-size:11.8px;line-height:20px;letter-spacing:-1.047px;color:#000;white-space:pre;font-weight:bold;">Files</div>
<div style="position:absolute;left:531.50px;top:336px;font-size:11.8px;line-height:20px;letter-spacing:-0.912px;color:#000;white-space:pre;font-weight:bold;">Plots</div>
<div style="position:absolute;left:575.30px;top:336px;font-size:11.8px;line-height:20px;letter-spacing:-0.936px;color:#000;white-space:pre;font-weight:bold;">Packages</div>
<div style="position:absolute;left:641.30px;top:336px;font-size:11.8px;line-height:20px;letter-spacing:-0.624px;color:#000;white-space:pre;font-weight:bold;">Help</div>
<svg style="position:absolute;left:893px;top:347px;overflow:visible" width="14" height="6" viewBox="0 0 14 6" ><rect x=".5" y=".5" width="13" height="5" rx="1" fill="#fff" stroke="#999" stroke-width="1"/><rect x="0" y="0" width="14" height="2.6" rx="1" fill="#8e8e8e"/></svg>
<svg style="position:absolute;left:911px;top:341px;overflow:visible" width="14" height="12" viewBox="0 0 14 12" ><rect x=".5" y=".5" width="13" height="11" rx="1" fill="#f4f4f5" stroke="#999" stroke-width="1"/><rect x="0" y="0" width="14" height="2.8" rx="1" fill="#8e8e8e"/></svg>
<div style="position:absolute;left:481px;top:358px;width:451px;height:23px;background:linear-gradient(180deg,#ffffff 0,#f9fafb 50%,#eceef1 100%);border-bottom:1px solid #bfc3cb"></div>
<svg style="position:absolute;left:489px;top:364px;overflow:visible" width="15" height="13" viewBox="0 0 15 13" ><path d="M.7 6.5L6.8 .8V3.6H14.3V9.4H6.8V12.2Z" fill="#8cc4ee" stroke="#3f86c6" stroke-width="1" stroke-linejoin="round"/></svg>
<svg style="position:absolute;left:517px;top:364px;overflow:visible" width="15" height="13" viewBox="0 0 15 13" ><path d="M14.3 6.5L8.2 .8V3.6H.7V9.4H8.2V12.2Z" fill="#dbe9f6" stroke="#b4cbe4" stroke-width="1" stroke-linejoin="round"/></svg>
<div style="position:absolute;left:539px;top:362px;width:1px;height:16px;background:#d0d3d8"></div>
<svg style="position:absolute;left:548px;top:362px;overflow:visible" width="15" height="14" viewBox="0 0 15 14" ><path d="M6 8.5L1.5 13" stroke="#b8783a" stroke-width="2.6" stroke-linecap="round"/><path d="M6.4 8.1L5 9.5" stroke="#888" stroke-width="2.2"/>
<circle cx="9.4" cy="5.4" r="4.7" fill="#e8f4fc" stroke="#6f94b8" stroke-width="1.3"/><path d="M9.4 2.6V8.2M6.6 5.4H12.2" stroke="#22a860" stroke-width="2"/></svg>
<div style="position:absolute;left:568.00px;top:360px;font-size:12px;line-height:20px;letter-spacing:-0.691px;color:#000;white-space:pre;">Zoom</div>
<div style="position:absolute;left:606.5px;top:362px;width:1px;height:16px;background:#d0d3d8"></div>
<svg style="position:absolute;left:615px;top:363px;overflow:visible" width="15" height="12" viewBox="0 0 15 12" ><rect x="2.5" y=".5" width="12" height="11" fill="#fff" stroke="#9aa0ac" stroke-width="1"/><rect x="4" y="2" width="9" height="8" fill="#3f8ad8"/><path d="M4 7.5Q8 5.5 13 8V10H4Z" fill="#e8a020"/>
<path d="M0 4.6H3.5V3L6.5 5.4L3.5 7.8V6.2H0Z" fill="#333"/></svg>
<div style="position:absolute;left:633.30px;top:360px;font-size:12px;line-height:20px;letter-spacing:-0.496px;color:#000;white-space:pre;">Export</div>
<svg style="position:absolute;left:668.5px;top:369px;overflow:visible" width="5" height="3" viewBox="0 0 5 3" ><path d="M0 0H5L2.5 3Z" fill="#000"/></svg>
<div style="position:absolute;left:681.5px;top:362px;width:1px;height:16px;background:#d0d3d8"></div>
<svg style="position:absolute;left:689px;top:363px;overflow:visible" width="18" height="14" viewBox="0 0 18 14" ><rect x="6.5" y="3.5" width="11" height="10" fill="#fff" stroke="#b4b8c0" stroke-width="1"/><path d="M7 14.2H18" stroke="#999" stroke-width=".8" opacity=".6"/>
<circle cx="5.2" cy="5.4" r="4.9" fill="#c8281e" stroke="#8e1810" stroke-width=".8"/><path d="M3.2 3.4L7.2 7.4M7.2 3.4L3.2 7.4" stroke="#fff" stroke-width="1.8"/></svg>
<div style="position:absolute;left:714.5px;top:362px;width:1px;height:16px;background:#d0d3d8"></div>
<svg style="position:absolute;left:721.5px;top:362px;overflow:visible" width="16" height="15" viewBox="0 0 16 15" ><ellipse cx="7" cy="14.3" rx="6.5" ry="1" fill="#000" opacity=".18"/>
<path d="M15.2 .9L11 4.8" stroke="#b5533a" stroke-width="2" stroke-linecap="round"/>
<path d="M8.6 4L12 6.8Q12 10.5 11 13.2Q7 15 3.2 14.6Q1 12.8 .2 10.4Q5 8.5 8.6 4Z" fill="#efd27c" stroke="#d2ac4a" stroke-width=".7"/>
<path d="M7.4 5.6L10.9 8.3M6.6 6.6L10.6 9.6" stroke="#c89a3a" stroke-width=".8"/>
<path d="M3 11.5L5 13.5M5.5 10L8 13.5M8 8.5L9.5 12.5" stroke="#dcb658" stroke-width=".6"/></svg>
<div style="position:absolute;left:739.50px;top:360px;font-size:12px;line-height:20px;letter-spacing:-0.398px;color:#000;white-space:pre;">Clear All</div>
<svg style="position:absolute;left:911px;top:361.9px;overflow:visible" width="16" height="16" viewBox="0 0 16 16" ><path d="M12.25 3.05A7 7 0 1 0 13.48 11.28L10.21 9.55A3.3 3.3 0 1 1 9.63 5.67L7.5 8.1H14.8V.9Z" fill="#e0e7f4" stroke="#9cadc9" stroke-width="1" stroke-linejoin="round"/></svg>
<div style="position:absolute;left:241px;top:448px;width:8px;height:3px;border-top:1px solid #c4c6cb;border-bottom:1px solid #c4c6cb"></div>
<div style="position:absolute;left:703px;top:329px;width:8px;height:3px;border-top:1px solid #c4c6cb;border-bottom:1px solid #c4c6cb"></div>
<div style="position:absolute;left:475px;top:425px;width:3px;height:8px;border-left:1px solid #c4c6cb;border-right:1px solid #c4c6cb"></div>
<!--PLOTSTART--><svg style="position:absolute;left:481px;top:382px" width="451" height="389" viewBox="481 382 451 389" font-family="Liberation Sans, sans-serif">
<defs><clipPath id="pc"><rect x="575" y="427" width="251" height="295"/></clipPath></defs>
<rect x="575" y="427" width="251" height="295" fill="#e5e5e5"/>
<path d="M592.7 427V722M628.6 427V722M664.5 427V722M700.4 427V722M736.2 427V722M772.2 427V722M808.1 427V722M575 679.1H826M575 606.1H826M575 533.1H826M575 460.1H826" stroke="#f2f2f2" stroke-width="0.7" fill="none"/>
<path d="M610.6 427V722M646.5 427V722M682.4 427V722M718.3 427V722M754.2 427V722M790.1 427V722M575 715.6H826M575 642.6H826M575 569.6H826M575 496.6H826" stroke="#ffffff" stroke-width="1.1" fill="none"/>
<g fill="none" stroke-width="3.6" stroke-linecap="round" clip-path="url(#pc)"><path stroke="#00BE67" d="M588.5 710h0M593 710.5h0M589 710h0"/><path stroke="#C77CFF" d="M589 703.5h0M590 704.5h0M593.5 699.5h0"/><path stroke="#CD9600" d="M593 711h0M592 711h0M598.5 711h0M594 710h0M620 700.5h0M625 701h0M607.5 706.5h0M615 703h0M593 709.5h0M597.5 711h0M598.5 710h0M606.5 705.5h0M597 711h0M623 699.5h0M606 705.5h0M633 698h0M607.5 705h0M609 704h0M607 704.5h0M601.5 708.5h0M596 710.5h0M636.5 690h0M626.5 698.5h0M617.5 703.5h0"/><path stroke="#7CAE00" d="M590.5 711h0M595.5 710.5h0M591.5 711h0M593 710h0M590.5 710.5h0M593.5 709h0M588.5 711h0"/><path stroke="#F8766D" d="M596.5 711h0M620.5 701.5h0M605 709.5h0M609 707h0M612 707.5h0M608 707h0M620.5 701h0M615 705h0M600.5 710.5h0M602.5 709h0M611 706.5h0M616.5 705h0M609 706h0M610.5 705.5h0M649.5 692h0M615 703.5h0M604.5 709h0M624.5 701h0M627 700h0M600 710.5h0M616.5 704h0M635.5 693h0M598.5 710.5h0M646.5 693h0M605.5 709h0M605 709h0M633 695.5h0M604 708.5h0M597.5 710.5h0M613.5 707h0"/><path stroke="#00BFC4" d="M589 711h0M594 699h0"/><path stroke="#FF61CC" d="M590 702.5h0M592 699.5h0"/><path stroke="#00A9FF" d="M588.5 708.5h0M591 702.5h0M589 706h0"/><path stroke="#00BE67" d="M594 706h0M590 709h0M606.5 704h0M596 705.5h0M596 703h0"/><path stroke="#F8766D" d="M626 698.5h0M640 692h0M628 697h0M633 694h0M621 699.5h0M611 705.5h0M602.5 708.5h0M653 683h0M631.5 697h0M633.5 693.5h0M632 693.5h0M629 696h0M649 689h0M627 696h0M627 695h0M640.5 687.5h0M617 700.5h0M658 686.5h0"/><path stroke="#CD9600" d="M618.5 702h0M635 691.5h0M606.5 704.5h0M599.5 709.5h0M618.5 700.5h0M589 710.5h0M604.5 706.5h0M599.5 708h0M612.5 705h0M616 702.5h0M622.5 697h0M620 699h0M611.5 704h0M612 702h0M642.5 688.5h0M607 703h0M608.5 702.5h0M640.5 687h0M627 694.5h0"/><path stroke="#FF61CC" d="M589.5 699.5h0M597 689.5h0M597.5 689h0"/><path stroke="#7CAE00" d="M623 697h0M592 710.5h0M608 703.5h0M640 689.5h0M595 708.5h0M596.5 710h0M590.5 708h0M602.5 704.5h0M599.5 707.5h0M607.5 703.5h0M622 695.5h0M598 708h0"/><path stroke="#C77CFF" d="M590.5 705h0M596 694.5h0M591.5 702.5h0M592 696.5h0M596 698.5h0M599.5 677.5h0M591 701h0M592.5 702h0"/><path stroke="#00A9FF" d="M590 705.5h0M589 707.5h0M592 705.5h0M592 707h0M590 706.5h0M591 704h0M596 702h0M593.5 703.5h0"/><path stroke="#00BFC4" d="M603.5 705h0"/><path stroke="#C77CFF" d="M596.5 691h0M596 697h0M597 692.5h0"/><path stroke="#00BE67" d="M593 707.5h0M596 705h0M602 703.5h0M596.5 701.5h0M600.5 703.5h0M597.5 703h0M597 701.5h0M602.5 702h0M618.5 695h0M603.5 700h0M596.5 705.5h0M602 702h0M622.5 693h0"/><path stroke="#00BFC4" d="M596.5 703.5h0M598 705.5h0M597.5 700h0M600 704h0M603.5 700.5h0"/><path stroke="#00A9FF" d="M598 688h0M596 699.5h0M596.5 700.5h0"/><path stroke="#7CAE00" d="M596 708.5h0M605 705h0M615 701h0M603.5 703.5h0M621.5 695.5h0M611 701.5h0M615 700h0M598 706h0M622 694h0M625 695.5h0M604.5 701.5h0M607 700.5h0M598.5 702h0M613.5 699.5h0M625 694h0M637 686.5h0"/><path stroke="#CD9600" d="M612.5 700h0M618 697.5h0M605.5 702.5h0M647.5 692h0M620.5 696h0M620 697h0M613.5 704h0M619.5 695h0M626.5 693.5h0M604 703h0M616.5 697.5h0M633 692.5h0M632 690h0M617 695.5h0M613.5 698h0M628.5 692.5h0M610.5 700.5h0M646.5 688.5h0"/><path stroke="#FF61CC" d="M592.5 700.5h0M596 693h0M601 685.5h0M605.5 675.5h0"/><path stroke="#F8766D" d="M640 692.5h0M626 698h0M610 704h0M634 692.5h0M630.5 694.5h0M631 694.5h0M659.5 683h0M628.5 694h0M651.5 681.5h0M650 685.5h0M657.5 678h0M642.5 685.5h0"/><path stroke="#FF61CC" d="M605 676h0M598.5 688h0M607.5 676h0M600.5 688h0M604 688.5h0M598.5 692h0M598 694h0"/><path stroke="#CD9600" d="M617 695h0M638 684.5h0M638.5 682.5h0M603 697.5h0M635.5 684.5h0M631.5 688.5h0M630 690.5h0M613.5 696.5h0M636.5 688.5h0M635 687.5h0"/><path stroke="#00BE67" d="M606 699.5h0M603.5 699.5h0M602 699h0M603.5 695.5h0M614 697.5h0M605 694.5h0M617 694h0M610.5 696h0"/><path stroke="#7CAE00" d="M601 705.5h0M612 698h0M630 692.5h0M607.5 699h0M632.5 689h0M610.5 697.5h0M617.5 694h0M640.5 685.5h0M625.5 693.5h0M640 685h0M610.5 700h0"/><path stroke="#00BFC4" d="M598.5 703h0M601 696.5h0M608.5 696.5h0M603.5 699h0"/><path stroke="#00A9FF" d="M601.5 699h0M599 696.5h0M596 695.5h0M602 692.5h0M598.5 700.5h0M599 685h0M605 696.5h0M600.5 693.5h0"/><path stroke="#F8766D" d="M640 687.5h0M634.5 691h0M648 690h0M647.5 688.5h0M644 687h0M634.5 689h0M656 682h0M649 685.5h0M635.5 688.5h0M652 681h0M664 677.5h0M646 684h0M670 674.5h0M650 681h0"/><path stroke="#C77CFF" d="M597.5 692h0M602 688.5h0M602 691h0M598.5 698.5h0M601 691h0M598.5 695.5h0M599.5 690.5h0M608.5 677h0M603.5 695h0M599 687h0M597 694.5h0M599 691.5h0"/><path stroke="#FF61CC" d="M600 684h0M603.5 680h0"/><path stroke="#00BE67" d="M608.5 694h0M612 695.5h0M607.5 696h0M597.5 705h0M614.5 696.5h0M631.5 686h0M614.5 692h0M630.5 686h0M622 689.5h0"/><path stroke="#C77CFF" d="M598 690h0M598.5 699h0M608 691h0M598.5 693h0M604 682.5h0M604 676.5h0M602 693.5h0M603.5 686h0M600.5 683h0M603 691.5h0M602 684h0M603.5 685h0M607 686.5h0"/><path stroke="#00BFC4" d="M600.5 700h0M610.5 692h0M606.5 694h0M605 693.5h0M610.5 691h0M611 691h0"/><path stroke="#7CAE00" d="M620 694h0M625.5 692.5h0M635 684h0M615 695h0M626 691h0M623 690.5h0M625 687.5h0M622.5 691h0M633.5 686h0M635 683h0M639 682h0"/><path stroke="#CD9600" d="M639.5 682.5h0M630 688.5h0M636.5 687.5h0M617.5 698h0M633 688h0M618.5 692h0M641.5 684.5h0M627 693h0M644 686h0M637 681.5h0M651.5 678.5h0M643.5 682.5h0M629.5 692h0"/><path stroke="#00A9FF" d="M600.5 694.5h0M606 692.5h0M604 687h0M609.5 690.5h0M605.5 689h0M608 689.5h0M608 688h0"/><path stroke="#F8766D" d="M657.5 676.5h0M666 676.5h0M661 673.5h0M649.5 687h0M664 675.5h0M653.5 680h0M660 669h0M648.5 686h0M655 675h0M646.5 685.5h0M646.5 683.5h0M661.5 672h0M657 671h0"/><path stroke="#FF61CC" d="M601.5 681h0M604 684.5h0M604 678.5h0M605.5 683h0M610 671.5h0"/><path stroke="#C77CFF" d="M604 686h0M607 685h0M605.5 685h0M605 690h0M608.5 685h0M609 672h0M608.5 673.5h0M605 682.5h0M610.5 671h0M610 683h0"/><path stroke="#F8766D" d="M663.5 672h0M666.5 669.5h0M671.5 671.5h0M647.5 681.5h0M655.5 679h0M648 680h0M650 680h0M667 671h0M649.5 683h0M662 670.5h0M658.5 683h0"/><path stroke="#00A9FF" d="M606 694.5h0M605.5 680.5h0M610.5 688h0M596.5 698h0M605 691h0M610.5 684.5h0M605.5 687h0"/><path stroke="#00BE67" d="M611.5 691h0M619 690.5h0M611.5 687h0M621.5 688.5h0M641 681.5h0M620.5 685h0"/><path stroke="#CD9600" d="M641.5 682h0M649.5 682h0M626.5 690.5h0M628.5 691.5h0M642 679.5h0M628.5 688h0M631 684h0M626.5 687.5h0M649.5 680h0M640.5 680h0M646.5 677.5h0M644.5 681.5h0M639 681.5h0M645 681h0"/><path stroke="#7CAE00" d="M613.5 694h0M624.5 687h0M611 695h0M626.5 689h0M604.5 698h0M615 689.5h0M631.5 685.5h0M644.5 677.5h0M613 691.5h0M631 685.5h0M651.5 676h0M618.5 689h0M640 681h0M635 686h0M611 695.5h0"/><path stroke="#00BFC4" d="M614.5 693h0M616.5 689.5h0M611 692.5h0M615.5 693.5h0M610.5 689h0M612 690h0"/><path stroke="#F8766D" d="M646.5 679.5h0M655 678h0M656.5 671.5h0M646.5 677h0M647.5 679h0M663 677h0M669 667.5h0M657.5 666.5h0M647 678h0M648 683.5h0M658.5 667h0M671.5 665h0M661.5 666.5h0M671 664.5h0"/><path stroke="#C77CFF" d="M609.5 677h0M610 680h0M611.5 680h0M604 690.5h0M611.5 682.5h0M606 678h0"/><path stroke="#00BE67" d="M631.5 682h0M623.5 686h0M640.5 679h0M628.5 685.5h0M618.5 687h0M629 682.5h0M613.5 689.5h0M613 687.5h0M629.5 682h0M627.5 682.5h0M616 682h0M636.5 681h0"/><path stroke="#CD9600" d="M626 688h0M628 683h0M627 686h0M643 677.5h0M640 682.5h0M651 673.5h0M621.5 693h0M656 674.5h0M640 682h0M634.5 684h0M647.5 677h0M662.5 667h0M631.5 681h0M643 675.5h0"/><path stroke="#00A9FF" d="M611.5 685.5h0M609 681.5h0M606.5 681.5h0M615.5 685h0M613 686.5h0M613 683.5h0"/><path stroke="#00BFC4" d="M620 684.5h0M611 693h0M625 685.5h0M627.5 683h0M608.5 678.5h0M611 689h0M613.5 682.5h0M620.5 679h0M613.5 685.5h0"/><path stroke="#FF61CC" d="M606 679h0"/><path stroke="#7CAE00" d="M655 664.5h0M642.5 678h0M632 681.5h0M623 684.5h0M622 683.5h0M617.5 683h0M625 683.5h0M626.5 685h0M618.5 686h0M626 683.5h0M614.5 687.5h0M646.5 674.5h0"/><path stroke="#CD9600" d="M656.5 678h0M645 674h0M634 680.5h0M647.5 678h0M633.5 684h0M659.5 666h0M642 676h0M668 656.5h0M651 673h0M650.5 677.5h0M656 670h0M652.5 671.5h0M615 685h0M654 664.5h0M647.5 673h0M637 678.5h0"/><path stroke="#00A9FF" d="M622 675h0M616 681h0M620 683h0M623.5 678h0M611 671.5h0M612 677h0"/><path stroke="#00BFC4" d="M623.5 675.5h0M613.5 680.5h0M623.5 682.5h0M614 676.5h0M636 676h0"/><path stroke="#7CAE00" d="M633 680h0M633.5 680h0M642 677.5h0M634.5 677.5h0M633 678h0M641.5 677h0M626 680h0"/><path stroke="#00BE67" d="M617 688h0M621.5 677h0M616.5 681.5h0M633 679h0M618.5 686.5h0M634.5 678.5h0M632.5 678.5h0M625.5 679h0M625.5 680h0M628.5 680.5h0M621 681.5h0M625 677h0M626 682h0"/><path stroke="#FF61CC" d="M603.5 671.5h0M610.5 673.5h0M604 677.5h0M610.5 673h0"/><path stroke="#C77CFF" d="M607 677.5h0M611.5 679h0M612.5 685h0M611 673.5h0M618.5 680.5h0"/><path stroke="#F8766D" d="M658 668.5h0M661 676.5h0M648.5 679.5h0M665.5 663.5h0M653 673h0M658 674.5h0M661 669.5h0M664 674.5h0M683.5 661h0M682 658.5h0M672.5 664h0M658.5 667.5h0M663.5 668.5h0M669 661h0M686 661h0M685 666h0M650.5 671.5h0M669 653.5h0"/><path stroke="#C77CFF" d="M612 661h0M618.5 670h0M620.5 674.5h0M613 670h0M612.5 675h0M618 668.5h0M614 680h0M622 666h0M613 669.5h0M617 671h0"/><path stroke="#00BFC4" d="M620 682h0M621 671h0M626.5 679h0M628.5 677.5h0M634.5 675h0M628 679h0M639.5 674h0M632 673.5h0M625.5 674.5h0"/><path stroke="#00BE67" d="M625 676.5h0M624.5 674.5h0M632 676.5h0M626 677.5h0M619 680h0M615 681h0M643 673h0M630 677h0M644.5 671.5h0"/><path stroke="#CD9600" d="M647 671.5h0M654.5 668h0M635 676h0M639 675h0M648 673.5h0M640.5 674h0M670 663.5h0M638 676.5h0M636.5 673.5h0M653.5 670.5h0M655.5 672h0M650 669.5h0M665 667.5h0M640 679h0"/><path stroke="#00A9FF" d="M615 675.5h0M623 673.5h0M616.5 678.5h0M612 673h0M611.5 672h0M614.5 673.5h0M619 676h0"/><path stroke="#F8766D" d="M648.5 676.5h0M687.5 664h0M649.5 675h0M678.5 665h0M665 668.5h0M679 661.5h0M682 655h0M683 664h0M684.5 659h0M661.5 670h0M684 657h0M686.5 660h0"/><path stroke="#FF61CC" d="M618.5 656.5h0M619.5 678.5h0M609 666h0M616.5 674.5h0"/><path stroke="#7CAE00" d="M644.5 672h0M626.5 682h0M633.5 677.5h0M635 675h0M631 678.5h0M625.5 676.5h0M630 678.5h0M637 680.5h0M631 673.5h0"/><path stroke="#FF61CC" d="M618.5 666h0M611 666.5h0M616.5 662h0M610.5 670h0M618 667h0M614 662h0M618.5 663h0M615 670.5h0M610 668h0"/><path stroke="#7CAE00" d="M633.5 673h0M653 667h0M628.5 674h0M642.5 670h0M627 678.5h0M655 663.5h0M647.5 668.5h0M649.5 671h0M639 672.5h0"/><path stroke="#00A9FF" d="M625 648h0M633 672h0M618.5 657.5h0M613 674h0M626.5 673.5h0M625 670.5h0"/><path stroke="#CD9600" d="M648 675h0M650 671h0M649.5 677.5h0M649.5 669h0M648 671h0M658 662h0M665.5 657.5h0M649.5 673h0M642.5 669h0M646.5 666h0M641.5 673h0"/><path stroke="#C77CFF" d="M617 665.5h0M624.5 660.5h0M623.5 667h0M621.5 671.5h0M620.5 663h0M621 662.5h0M615 672h0M620 666h0M620.5 661h0M620.5 668.5h0M618.5 660h0M637 666.5h0M620.5 672h0"/><path stroke="#00BE67" d="M630 673h0M648.5 669h0M629.5 673.5h0M629.5 672.5h0M625 674h0M653 668h0M625 672.5h0"/><path stroke="#00BFC4" d="M618.5 673.5h0M623.5 664h0M622 667.5h0M633.5 670.5h0M632.5 671h0"/><path stroke="#F8766D" d="M685 654h0M656 664h0M681 663h0M694.5 659h0M654 677.5h0M684.5 653h0M652.5 665h0M652.5 667h0M662 664.5h0M648.5 667.5h0M658.5 665h0M667 657.5h0M692 652.5h0M663 666h0"/><path stroke="#CD9600" d="M639.5 666h0M646.5 669.5h0M658.5 661h0M656.5 662h0M647.5 665.5h0M664.5 654.5h0M651.5 666h0M661.5 656h0M656 660h0M650 666h0M663 656h0M648 667h0M648.5 666h0M660 659h0"/><path stroke="#00A9FF" d="M629.5 671h0M616.5 660.5h0M620 673h0M638 670.5h0M625 668.5h0M623.5 654.5h0M626.5 670h0M620.5 658h0M633 666h0M615 668h0M633 663.5h0"/><path stroke="#7CAE00" d="M625.5 671.5h0M635.5 667h0M622 681h0M653.5 662.5h0M669 657h0M641.5 669.5h0M656 659.5h0M636.5 669.5h0M636.5 673h0"/><path stroke="#C77CFF" d="M610.5 676h0M623 656h0M612.5 664h0M612.5 667h0M621.5 658.5h0M624 664.5h0M624.5 656h0M628.5 667h0M614 669.5h0M632 664.5h0M620.5 660h0"/><path stroke="#00BFC4" d="M652.5 664.5h0M636 673h0M640 667.5h0M639 669.5h0M639 665h0M630 668h0"/><path stroke="#00BE67" d="M632.5 670h0M637.5 669h0M624.5 665.5h0M642 668h0M646.5 669h0M643 666h0M631 666.5h0M640 666.5h0"/><path stroke="#F8766D" d="M671 657h0M660.5 659.5h0M661 663h0M667 666.5h0M665 664h0M677.5 655.5h0M672.5 658.5h0M662.5 658.5h0M681 661.5h0M665.5 664h0M686.5 655.5h0M683.5 660h0M662.5 659h0"/><path stroke="#FF61CC" d="M613.5 656.5h0M610.5 656.5h0"/><path stroke="#00BFC4" d="M634.5 668.5h0M642 663.5h0M635.5 665h0M635 665h0M632 669h0M637 663.5h0M630.5 663h0M630 658h0M631.5 656.5h0M632 660h0M641.5 664h0"/><path stroke="#7CAE00" d="M675 645.5h0M640 669h0M626.5 675h0M663 662.5h0M653 660.5h0M661.5 655h0M658.5 650h0M658 659.5h0"/><path stroke="#00BE67" d="M645 668h0M641.5 665.5h0M634.5 673h0M627 666.5h0M637.5 664h0M629.5 671.5h0M622 669h0M630 662.5h0M645 663h0"/><path stroke="#F8766D" d="M662.5 663h0M688.5 652.5h0M672.5 656h0M692.5 651h0M683 654h0M676 659h0M654.5 659.5h0M688 651.5h0M687.5 651h0M687 643h0M666.5 654h0M687 650h0M678 657.5h0"/><path stroke="#FF61CC" d="M625 660h0M628 641h0M626 639.5h0M625.5 658.5h0"/><path stroke="#C77CFF" d="M625 663.5h0M620.5 660.5h0M622 654h0M625 650h0M625.5 664.5h0M615.5 665h0M622 661.5h0M616.5 661h0M621 655.5h0M619 653h0M622 662.5h0M629.5 665h0M615 662h0M621 656.5h0"/><path stroke="#00A9FF" d="M639 664h0M625 666h0M630.5 669h0M625 658.5h0M631.5 659.5h0M625.5 657h0M635 663.5h0"/><path stroke="#CD9600" d="M675 644.5h0M659.5 656.5h0M646.5 664.5h0M672.5 649.5h0M663.5 655h0M676.5 643h0M641 668h0M651.5 664.5h0"/><path stroke="#F8766D" d="M681.5 648h0M682.5 643h0M685 655h0M700.5 646.5h0M664.5 660.5h0M686.5 648h0M683 657.5h0M690.5 655h0M682 652h0M682.5 656h0M678.5 643.5h0M691 646h0M678.5 655h0M647.5 664h0M682.5 646.5h0M664.5 659h0M679 646h0M684.5 655.5h0M684 652.5h0"/><path stroke="#7CAE00" d="M658.5 652h0M651 661h0M653 656h0M657.5 650.5h0M645 656.5h0"/><path stroke="#00A9FF" d="M639 662h0M628 663.5h0M632 659.5h0M625 661h0M635 663h0M629 656.5h0M633 656h0M634.5 658h0M639.5 660h0M634.5 660h0"/><path stroke="#C77CFF" d="M622 652h0M625.5 660h0M613.5 666.5h0M625.5 672h0M625 663h0M626 661h0M628 658.5h0M624.5 667.5h0M635 651.5h0"/><path stroke="#FF61CC" d="M623 651.5h0"/><path stroke="#00BFC4" d="M640 662.5h0M633.5 663.5h0M642 660.5h0M636 662h0"/><path stroke="#00BE67" d="M643 660.5h0M641.5 662.5h0M641.5 659.5h0M640 661.5h0M640 664.5h0M639.5 657h0M643 657.5h0"/><path stroke="#CD9600" d="M652.5 662.5h0M670 653h0M654.5 661.5h0M652 659.5h0M650 663.5h0M669.5 651.5h0M666.5 652h0M672 633h0M658 651.5h0M662.5 654.5h0M673 652.5h0M658 648h0M650 658.5h0M658.5 655.5h0M649.5 661.5h0M655.5 655h0M651.5 661.5h0M648.5 659h0M657.5 651h0"/><path stroke="#C77CFF" d="M625.5 657.5h0M633.5 655h0M629 655.5h0M625 652.5h0M626.5 652h0M628 654h0M640 656h0M625 645.5h0M627.5 651h0"/><path stroke="#FF61CC" d="M626 653h0M627 651.5h0M625.5 649h0"/><path stroke="#00BE67" d="M634.5 663h0M629.5 662.5h0"/><path stroke="#CD9600" d="M666.5 653.5h0M667 650.5h0M657 649h0M652 655.5h0M661.5 653h0M657 651.5h0M672 637.5h0M657 654.5h0M663 654h0M665.5 651.5h0M671 654h0M657.5 653.5h0M656 657.5h0M646.5 656h0M676.5 645h0M650.5 655.5h0M646.5 653.5h0M678 653h0M656 653h0M650.5 657h0M689 639.5h0M661.5 652.5h0M647 655h0"/><path stroke="#00A9FF" d="M625.5 655h0M632.5 647h0M634 650h0M630 653h0M627 658.5h0M637.5 652.5h0M629 660.5h0M628.5 654.5h0M637.5 648.5h0"/><path stroke="#7CAE00" d="M642.5 666h0M645.5 659h0M657.5 648h0M647 656.5h0M650 663h0M653 658.5h0"/><path stroke="#00BFC4" d="M645 654h0M636 657.5h0M636.5 660.5h0M641.5 658.5h0M640 657h0M635.5 655h0"/><path stroke="#F8766D" d="M685.5 650.5h0M696.5 644h0M691.5 645h0M700 639h0M682.5 650h0M691 644.5h0M672.5 644.5h0M685 649.5h0M683 649h0M684 652h0M692.5 644h0M691.5 634h0M673 651h0M687.5 645h0M686.5 639.5h0M684 646.5h0"/><path stroke="#7CAE00" d="M646.5 653h0M654.5 651h0M655.5 651.5h0M671 633.5h0M648 656h0M663 644.5h0M668 647.5h0"/><path stroke="#00A9FF" d="M636.5 653.5h0M632.5 654h0M631.5 646h0M633.5 649.5h0M638 652.5h0M635 649.5h0M643 646h0M640 650.5h0M632.5 637h0M625 651.5h0"/><path stroke="#F8766D" d="M676.5 641.5h0M689.5 639h0M683 651h0M685.5 656.5h0M684 647.5h0M682.5 642.5h0M686 643.5h0M691.5 641.5h0M684.5 651h0M694 649.5h0M700.5 628.5h0M697.5 637h0"/><path stroke="#00BFC4" d="M636.5 657.5h0M642.5 656.5h0M642 653.5h0M634.5 657h0M636.5 657h0M645.5 650.5h0M625.5 651h0M641 654h0"/><path stroke="#CD9600" d="M646.5 660.5h0M655 653h0M664 645.5h0M657.5 647h0M670.5 649.5h0M648.5 658.5h0M671 639.5h0M677.5 651h0M649.5 654.5h0M647.5 655.5h0M654.5 653.5h0M677.5 638.5h0M647 653.5h0M666 650.5h0M654 648h0M652 653h0"/><path stroke="#00BE67" d="M640.5 658h0M634.5 662h0M643 651h0M632.5 653.5h0M643 649.5h0"/><path stroke="#C77CFF" d="M628 642.5h0M620 649.5h0M634 647.5h0M625 642.5h0M627.5 648.5h0M634.5 639.5h0M627.5 641h0M639.5 650.5h0M632 645h0M631 650h0M625 644h0M628.5 646h0M633 653h0"/><path stroke="#FF61CC" d="M629.5 647.5h0M629 653h0M626 645.5h0"/><path stroke="#00BE67" d="M639 654.5h0"/><path stroke="#00A9FF" d="M637 644h0M627 650.5h0M645 647h0M637 632h0M639.5 646.5h0M636 646h0M640 644h0"/><path stroke="#C77CFF" d="M627 644.5h0M627 646h0M635 643h0M633 645.5h0M627.5 643h0M627.5 655.5h0M632.5 644h0M634.5 643.5h0M633.5 646h0M636 648.5h0M633.5 641h0M633.5 638h0"/><path stroke="#7CAE00" d="M654 646h0M653.5 645.5h0M663 651.5h0M653 651.5h0M664.5 642.5h0M669.5 643.5h0M667.5 641h0M651 650.5h0M667.5 640.5h0M653 647.5h0M670 638.5h0"/><path stroke="#F8766D" d="M692 644h0M720 634h0M692.5 641h0M697.5 635h0M685.5 643.5h0M690.5 642.5h0M664 647h0M686.5 641h0M682.5 642h0M688 632.5h0M661.5 647.5h0M698 650h0M667.5 639.5h0M684.5 639h0M671.5 649h0"/><path stroke="#CD9600" d="M663 650h0M661 649h0M671.5 647h0M650 651.5h0M661.5 648.5h0M694 633.5h0M667 647h0M652.5 646.5h0M651 657.5h0M676 647h0M657.5 645h0M662 643.5h0M651 648h0M673 646h0M646.5 648.5h0M649.5 652h0M662.5 642.5h0M664 648h0M670 639.5h0M646.5 651h0M652 645h0"/><path stroke="#FF61CC" d="M631 655h0M636 642h0M638.5 642.5h0M626.5 640.5h0"/><path stroke="#00BFC4" d="M641 649h0M642 645.5h0M640.5 653h0"/><path stroke="#F8766D" d="M672 643h0M683 645.5h0M721.5 638.5h0M709 632.5h0M683.5 642.5h0M681 637.5h0M682.5 645h0M691.5 631.5h0M682.5 638h0M697.5 638.5h0M701.5 634.5h0M687.5 632.5h0M688 635.5h0M702 634h0M671.5 641.5h0"/><path stroke="#CD9600" d="M649 648.5h0M658 644h0M676.5 635h0M658.5 646.5h0M669.5 637h0M687.5 637h0M666 643h0M671 645.5h0M669 639.5h0M649 646.5h0M656.5 643h0M665.5 642h0M653 642h0M670 641h0M653 644h0M658.5 642h0M661.5 644h0M668 638h0M682.5 637h0M647 648h0M669.5 645h0M647 645.5h0M680 632.5h0M652.5 639h0M676 632.5h0M653.5 644h0"/><path stroke="#C77CFF" d="M639 641.5h0M640.5 643h0M636.5 639h0M634.5 641.5h0M631 634h0M630 644.5h0M639.5 639h0"/><path stroke="#00A9FF" d="M640 641.5h0M639 636.5h0M635 649h0M644 643.5h0M644.5 640.5h0"/><path stroke="#7CAE00" d="M651 645.5h0M648 652h0M671.5 636h0M646.5 646.5h0M653.5 639.5h0M667.5 646.5h0M649.5 645.5h0M650 651h0M670.5 635h0M675 630h0M671.5 644h0M640.5 645.5h0M670 635.5h0"/><path stroke="#00BE67" d="M647 649h0M654 644h0M665.5 641.5h0"/><path stroke="#FF61CC" d="M626.5 637h0M629.5 635.5h0M628.5 644.5h0M627.5 636.5h0"/><path stroke="#00BFC4" d="M644.5 645h0"/><path stroke="#00A9FF" d="M639.5 648.5h0M642.5 641h0M634.5 644.5h0M639.5 641h0M643.5 639.5h0"/><path stroke="#C77CFF" d="M634.5 632h0M629 632h0M631.5 641h0M634.5 636.5h0M635 634.5h0M634.5 628h0M639 631.5h0"/><path stroke="#7CAE00" d="M659.5 641h0M662.5 641.5h0M677 634.5h0M672 630h0M658 639h0M658 637h0M643 643.5h0M654.5 639h0M648.5 644.5h0M656 648.5h0M651 640h0M661 638h0M647 638.5h0M674.5 628.5h0M648 650h0"/><path stroke="#F8766D" d="M726 623.5h0M694 635.5h0M679 637h0M688 633.5h0M726.5 636h0M720.5 628h0M691 642.5h0M681.5 641h0M728 636h0M683 639h0M686.5 634.5h0M692 622.5h0M719.5 630.5h0"/><path stroke="#CD9600" d="M685 637h0M677 640h0M665.5 640h0M655 643.5h0M653 643.5h0M647.5 649h0M651 643h0M683.5 637h0M666.5 638.5h0M657 635.5h0M649 645h0M655.5 641h0M646.5 644h0M655 638.5h0M651.5 640.5h0M649 644h0M676.5 632.5h0M669 636.5h0M657.5 639.5h0M658 642h0M663 635.5h0M696.5 629h0M671.5 632.5h0M655 638h0M691 626.5h0"/><path stroke="#FF61CC" d="M626.5 634.5h0M636.5 635.5h0M634 629h0M632 628h0"/><path stroke="#00BE67" d="M641.5 641.5h0M644.5 640h0M650.5 643.5h0M646 634h0M646.5 642.5h0"/><path stroke="#FF61CC" d="M640 621.5h0M643.5 638h0M640 631.5h0M643.5 624.5h0"/><path stroke="#C77CFF" d="M643.5 623.5h0M638.5 633h0M639.5 631.5h0M639 639.5h0M639.5 632h0M642.5 633h0M640 634h0"/><path stroke="#7CAE00" d="M647.5 643h0M664 639h0M660.5 640.5h0M679.5 627h0M648 643h0M666 637h0M650 644.5h0M646.5 633h0M646.5 636.5h0M654.5 636.5h0M643 636h0M650 637.5h0M650.5 642h0M648.5 642h0"/><path stroke="#00A9FF" d="M639.5 634h0M640 628h0M633.5 632.5h0"/><path stroke="#00BFC4" d="M659 632h0"/><path stroke="#F8766D" d="M724 616.5h0M684.5 640.5h0M719 625.5h0M696 639.5h0M697.5 636.5h0M683 639.5h0M692 634.5h0M692.5 641.5h0M695 628.5h0M691 636h0M686 632.5h0M684 633.5h0M684.5 629.5h0M733.5 633h0M732 618h0M684 633h0M690.5 627.5h0M694.5 627h0M694 618h0M697.5 617.5h0"/><path stroke="#00BE67" d="M646.5 637h0M648 648.5h0M660 636h0M647.5 637.5h0M646 631.5h0M652.5 637.5h0M647 636.5h0M646.5 634.5h0M651.5 634.5h0"/><path stroke="#CD9600" d="M669 632.5h0M679.5 636.5h0M681 630.5h0M664 634.5h0M675 635h0M678 630.5h0M680 635h0M672.5 632h0M661.5 633h0M684.5 630.5h0M668.5 632.5h0M658.5 634h0M671.5 630.5h0M669 631h0M681 619.5h0M686.5 630h0"/><path stroke="#F8766D" d="M723 625.5h0M696.5 626h0M689.5 628.5h0M737 631h0M690.5 629.5h0M700 629.5h0M694 632h0M700.5 624h0M699.5 623h0M719 620h0M719.5 622h0M691 624h0M690.5 619.5h0M683 630.5h0M720.5 625.5h0M686.5 629h0M702.5 626.5h0M682 632h0"/><path stroke="#7CAE00" d="M647.5 637h0M649 637.5h0M648.5 643.5h0M646.5 632h0M662 631.5h0M666 634.5h0M666.5 638h0M662.5 634.5h0M646.5 631h0M664.5 629h0M657.5 633h0M663.5 632.5h0M654.5 634.5h0M651.5 632h0M650 634.5h0M666 626.5h0"/><path stroke="#00BFC4" d="M651.5 634h0"/><path stroke="#C77CFF" d="M640 638.5h0M643 630.5h0M641 637h0M643 626h0M639 626.5h0M637.5 623h0"/><path stroke="#FF61CC" d="M640 627h0M633 623.5h0M639.5 623h0M636.5 629h0M641 630h0"/><path stroke="#00A9FF" d="M643 629h0M639.5 636.5h0"/><path stroke="#00BE67" d="M650.5 639.5h0M653 634h0M649 635.5h0M676 628h0M658 635.5h0M664.5 630h0M651.5 633.5h0M645.5 622.5h0M646 611.5h0"/><path stroke="#CD9600" d="M673 628h0M661 631.5h0M666 633h0M673.5 625h0M666 638h0M686 629h0M691 616.5h0M686 628.5h0M672 628.5h0M691 624.5h0M647 639.5h0M667.5 633.5h0M690 630h0M664.5 628.5h0M670 629.5h0M651.5 630.5h0M682 621h0"/><path stroke="#FF61CC" d="M643.5 619h0"/><path stroke="#CD9600" d="M665.5 628h0M647 632.5h0M675.5 626h0M687 627h0M667.5 630h0M674 619.5h0M683 634h0M653.5 632.5h0M656 633h0M679.5 617h0M699 608.5h0M670 628.5h0M666 625h0M678 620h0M683 628.5h0M672 620h0M669.5 625.5h0M680.5 629h0M674 624.5h0M671 630.5h0M655 630h0M679 621.5h0M691.5 622.5h0M666 627.5h0M682 629h0"/><path stroke="#00BFC4" d="M646.5 626.5h0"/><path stroke="#F8766D" d="M695.5 630h0M718.5 617h0M683.5 636h0M720.5 622.5h0M687.5 623.5h0M698 628h0M701.5 616h0M683 626.5h0M688 621.5h0M720 627.5h0M722.5 612h0M718.5 623h0M740.5 609h0"/><path stroke="#C77CFF" d="M644.5 623.5h0M641 624.5h0M636.5 626h0M634 635.5h0M640 630.5h0M639 614h0M640 623.5h0M632 617h0"/><path stroke="#7CAE00" d="M663 631h0M652.5 630.5h0M658 626h0M648.5 633h0M647 634h0M681 618h0M674.5 627.5h0M647.5 632.5h0M675.5 621.5h0M650 630.5h0M648 632.5h0M655 627.5h0M679.5 625h0M670.5 628h0M658.5 627.5h0M658 631h0M648.5 635.5h0M646.5 630h0M667 624h0"/><path stroke="#00BE67" d="M670.5 626.5h0M648 634h0M660.5 630h0M671 624.5h0"/><path stroke="#00A9FF" d="M635 635h0M639 624h0M645 628h0"/><path stroke="#CD9600" d="M667.5 629h0M687.5 622.5h0M663.5 628h0M677.5 620.5h0M689 619h0M690 616h0M682.5 624h0M673 624.5h0M650.5 629.5h0M684.5 624.5h0M668 635h0M688 619.5h0M691 610.5h0M690.5 624h0M663 630.5h0M664 625.5h0M677.5 625h0M662.5 625.5h0M699.5 607h0M694.5 609.5h0M684.5 626h0M696 611.5h0M661.5 627h0M689.5 626.5h0M704 605.5h0M690 618.5h0M681 615.5h0M686.5 617.5h0M701.5 620h0M653.5 625h0"/><path stroke="#FF61CC" d="M640 612.5h0M640.5 622h0"/><path stroke="#7CAE00" d="M648.5 631.5h0M677.5 624h0M646.5 629h0M677 628.5h0M663 628h0M667.5 632.5h0M655 626.5h0M660 624.5h0M678 617.5h0M675.5 622.5h0M663 627h0M661.5 626h0M675 618.5h0M691.5 618h0M649.5 630.5h0M651 628.5h0M658.5 621h0"/><path stroke="#00A9FF" d="M643 618.5h0"/><path stroke="#00BE67" d="M647 635.5h0M657.5 622.5h0M657 629.5h0M661.5 625.5h0"/><path stroke="#F8766D" d="M697.5 632.5h0M701 621.5h0M722 618.5h0M734.5 612.5h0M720 622.5h0M704.5 630h0M692.5 638h0M724.5 617.5h0M729.5 615h0M724.5 615h0M679 628h0M698.5 615.5h0M709 619.5h0M720.5 624h0M706 613.5h0M729 621.5h0M696 619h0M718.5 611h0"/><path stroke="#C77CFF" d="M639 619h0M635.5 626h0"/><path stroke="#7CAE00" d="M673 618.5h0M648.5 626.5h0M675 617h0M671.5 621h0M673 623h0M671.5 617h0M658 621h0M656.5 619h0M661.5 622.5h0M663 624.5h0M655 624.5h0M651 623.5h0M669.5 620.5h0M662 619h0M678 611h0M688.5 610.5h0M645.5 616h0M662.5 621h0M668 617h0M664.5 620.5h0"/><path stroke="#00BE67" d="M646 617.5h0M650 624h0M651 627h0M674.5 614h0M646.5 624h0M659.5 617.5h0M665 621h0M654 621h0"/><path stroke="#F8766D" d="M718.5 617.5h0M720.5 615h0M727 613.5h0M734.5 617.5h0M719 613h0M719.5 610h0M741 615h0M729.5 619h0M702 605h0M719 614h0M720 613h0"/><path stroke="#C77CFF" d="M643 613h0M642.5 620h0M641 616h0"/><path stroke="#FF61CC" d="M640.5 610h0M634.5 616.5h0M633 619.5h0"/><path stroke="#CD9600" d="M683.5 627h0M692 608.5h0M685.5 618.5h0M685 619.5h0M685 619h0M681.5 622h0M647 629h0M662 628.5h0M682.5 617h0M657 616.5h0M667 621.5h0M682.5 616.5h0M668.5 624.5h0M688 613h0M654.5 623.5h0M684.5 622h0M679 616.5h0M676 618.5h0M707.5 610.5h0M685 617.5h0M665 621.5h0M683.5 618h0M695 610h0M663.5 623h0M680.5 610.5h0M664.5 623h0"/><path stroke="#00BFC4" d="M660 618.5h0M647 626h0M648 626.5h0"/><path stroke="#00A9FF" d="M646.5 617h0"/><path stroke="#7CAE00" d="M671.5 622h0M692.5 614h0M662 618.5h0M657 615.5h0M654.5 622.5h0M656 624.5h0M669 616h0M677 613h0M676.5 613.5h0M680.5 613h0M660.5 615h0M647 622.5h0M646.5 616.5h0M682.5 611h0M653 618h0M656.5 618h0M672.5 613.5h0M654.5 617h0M666.5 613h0M664.5 612h0M679.5 608.5h0"/><path stroke="#C77CFF" d="M644.5 608.5h0"/><path stroke="#00BE67" d="M647 628h0M653 619h0M662 625h0M659.5 615h0M648.5 622.5h0M650 620.5h0M647 617.5h0M676 616.5h0M655 617.5h0M653 623.5h0M670 617h0M646 613.5h0M647.5 617h0"/><path stroke="#F8766D" d="M737.5 616.5h0M737 611h0M698 619h0M753 623h0M719.5 609.5h0M770 615h0M732 613.5h0M720.5 608h0M727 604.5h0"/><path stroke="#CD9600" d="M698 612h0M656 622h0M688.5 609.5h0M654.5 627.5h0M666.5 618h0M696.5 615h0M698.5 620.5h0M650 622.5h0M688.5 614.5h0M666 620h0M687 616.5h0M683.5 621.5h0M682.5 615.5h0M682 610.5h0M679 617h0M691 612.5h0M684.5 620.5h0M683 615h0M672 615h0M683 619h0M697 605.5h0M693.5 605h0M692 607.5h0M656 616h0M671 612h0M665.5 616h0"/><path stroke="#00BFC4" d="M646.5 618h0M646.5 620h0M646.5 615h0"/><path stroke="#C77CFF" d="M640 602.5h0"/><path stroke="#7CAE00" d="M669.5 613.5h0M684.5 617.5h0M679 613.5h0M646.5 615.5h0M664 611.5h0M663 612.5h0M661.5 613h0M662.5 612.5h0M676 613h0M664.5 611h0M654 613h0M647.5 615h0M684 610h0M686 615h0M660.5 612h0"/><path stroke="#CD9600" d="M680.5 608.5h0M677 618h0M682.5 610.5h0M670.5 611h0M688 614.5h0M674 613h0M701 600h0M684.5 616h0M688.5 608h0M682.5 613h0M693 603.5h0M683 611.5h0M696 608.5h0M677.5 609h0M694 597.5h0M683 609.5h0M688.5 607h0M692 604.5h0M698 593.5h0M652.5 616h0M704 592h0M687.5 608h0M651.5 614.5h0M675 609.5h0M694.5 599.5h0M660.5 617.5h0M669.5 611.5h0M683 609h0M658 613.5h0"/><path stroke="#00BE67" d="M655 616h0M650 619.5h0M668 615h0M664.5 614h0M666 610.5h0M652 619h0M663 615.5h0M655 613h0M646 607h0M650.5 617h0M657 611.5h0M666.5 610h0M646.5 612.5h0"/><path stroke="#00A9FF" d="M651 621h0M646 609h0"/><path stroke="#00BFC4" d="M646.5 622h0M648 618h0M647 613.5h0M648 615.5h0M649.5 617h0M651.5 615h0M662.5 612h0"/><path stroke="#FF61CC" d="M643.5 607h0"/><path stroke="#F8766D" d="M718.5 609h0M724.5 612.5h0M719 610h0M790 620h0M754 600h0M720.5 620h0"/><path stroke="#FF61CC" d="M642 601h0"/><path stroke="#00BFC4" d="M650 618.5h0M650.5 613h0M655 609h0M646 604.5h0M668 605.5h0M646 603.5h0M660.5 610h0M647.5 610.5h0M672.5 610h0M648 607.5h0"/><path stroke="#F8766D" d="M726 601h0M791 598h0M742 591h0M718.5 597h0M727 598h0"/><path stroke="#CD9600" d="M656.5 608.5h0M702.5 592.5h0M670.5 602h0M683 613.5h0M689.5 606.5h0M663 618h0M658 613h0M711 591.5h0M685.5 612h0M697 600.5h0M691 601.5h0M691 604.5h0M696.5 611.5h0M682 605h0M684 609h0M692 598.5h0M685 610.5h0M695 602.5h0M687.5 609.5h0M688 604.5h0M694.5 602h0M694.5 601h0M699 602h0M687 608.5h0M671.5 604h0M680.5 608h0M672.5 608h0"/><path stroke="#7CAE00" d="M679 607h0M653.5 612h0M690.5 615h0M679 606h0M662 611h0M674 609.5h0M654.5 606h0M673 606h0M689.5 601h0M674.5 601.5h0M648 609.5h0"/><path stroke="#00A9FF" d="M647.5 612.5h0"/><path stroke="#00BE67" d="M647.5 613h0M647 611.5h0M650 617.5h0M658 612.5h0M659 610h0M659.5 608h0M647 619.5h0M648.5 612h0M650.5 611.5h0M655 610.5h0M653 610h0M646.5 610.5h0M657.5 607h0M645.5 593.5h0M648.5 613.5h0M663 606.5h0M657.5 603h0M676.5 605h0M655 605h0"/><path stroke="#00A9FF" d="M646.5 603.5h0M649.5 605.5h0"/><path stroke="#F8766D" d="M725.5 598h0M754 587.5h0M720 600.5h0M684 606.5h0M789.5 598h0M729 588h0M742 594.5h0"/><path stroke="#CD9600" d="M664 610.5h0M688.5 600.5h0M675 603.5h0M695.5 595h0M665.5 610.5h0M670 605h0M703.5 600.5h0M691.5 597.5h0M667.5 602h0M697.5 598h0M666 604.5h0M684.5 608h0M691 604h0M692 600h0M683 607h0M671.5 608h0M679 603.5h0M703.5 596.5h0M694 600h0M659.5 604h0M649 611.5h0M671.5 603h0M719 593.5h0M686 604.5h0M690.5 597.5h0"/><path stroke="#00BFC4" d="M649 612h0M660.5 610.5h0M666.5 600.5h0M648.5 605.5h0M668.5 606.5h0M654.5 602h0M656.5 601.5h0M662 600h0M664 603h0M645.5 602h0M658 598h0M658 601h0"/><path stroke="#7CAE00" d="M687.5 606h0M667.5 608h0M651 606h0M677.5 601.5h0M653.5 605.5h0M693.5 594.5h0M679.5 601h0M673.5 599.5h0M665 607.5h0M646.5 605.5h0M665.5 604h0M645.5 597.5h0M671 600h0M680 599.5h0M675 600.5h0M675.5 607.5h0M663 600h0"/><path stroke="#00BE67" d="M668 609h0M647.5 606.5h0M645.5 608h0M647.5 606h0M654.5 604.5h0M652 603.5h0M661 611h0M675.5 604h0M666 606.5h0M651 609h0M676 600h0"/><path stroke="#00A9FF" d="M659.5 602h0M661 599h0M660.5 597h0M646 577h0M647.5 603h0M668 599.5h0"/><path stroke="#F8766D" d="M771 586h0M766.5 592h0"/><path stroke="#00BE67" d="M663 604.5h0M647 602.5h0M676.5 597h0M666 605h0M657.5 605.5h0M653.5 599h0M682.5 598h0M704 590h0M648 602.5h0M670.5 598h0M653 608h0M662 598.5h0M661.5 603h0M655.5 598.5h0M662.5 599.5h0M659.5 595h0M671.5 596h0M659 602.5h0"/><path stroke="#00BFC4" d="M647 605.5h0M651.5 602h0M646 581.5h0M662.5 599h0M668 601h0"/><path stroke="#CD9600" d="M670 600h0M700 606.5h0M667.5 609.5h0M663.5 608.5h0M678 604.5h0M690.5 596.5h0M699.5 598.5h0M683 600.5h0M696 589h0M696.5 594h0M683.5 602.5h0M670 604.5h0M699 589h0M706 589.5h0M694 596h0M693 595h0M698 587h0M684.5 597.5h0M681.5 602.5h0M697.5 592h0M706 586h0M699 599.5h0M691 595h0M682.5 597h0M693.5 592.5h0M698 598h0"/><path stroke="#7CAE00" d="M647.5 605h0M653.5 603h0M682.5 599.5h0M685.5 601.5h0M661 606.5h0M682 604h0M652 599.5h0M683 598h0M649.5 604.5h0M685.5 602.5h0M683.5 604.5h0M652 610h0M671.5 598.5h0M698 596h0M670 599.5h0"/><path stroke="#FF61CC" d="M643.5 600h0M643.5 599h0"/><path stroke="#7CAE00" d="M664.5 599.5h0M673.5 597.5h0M657 597.5h0M679.5 598.5h0M681 596h0M646.5 599.5h0M686 600h0M678 590.5h0M679.5 588.5h0M679 593.5h0M682.5 595.5h0M667.5 594h0M678 588h0M678 598h0"/><path stroke="#00BE67" d="M670 595h0M655.5 597.5h0M646.5 595h0M666.5 598h0M647.5 594h0M662.5 596.5h0M646.5 592h0M651.5 596.5h0M668 595h0M667 596.5h0M661 595.5h0M648 592h0M656.5 591.5h0"/><path stroke="#00A9FF" d="M646.5 593h0M659 593.5h0M657.5 594h0M651 598h0M646.5 592.5h0M646.5 591.5h0M653 596.5h0M649 600h0"/><path stroke="#F8766D" d="M729.5 582.5h0M727 591.5h0"/><path stroke="#00BFC4" d="M647 601.5h0M647 600.5h0M652 601.5h0M658 592h0M662 596.5h0M655.5 595h0M653 598.5h0M647.5 595h0M654 595.5h0M664.5 598.5h0M646.5 591h0M646 596.5h0M672 599h0M676.5 596.5h0M679 592h0"/><path stroke="#C77CFF" d="M647 598h0"/><path stroke="#CD9600" d="M668 598.5h0M689 598h0M691.5 594h0M684.5 603.5h0M701 587.5h0M692.5 585h0M700.5 592.5h0M687.5 603.5h0M710.5 572.5h0M706 585h0M703.5 585.5h0M707.5 582.5h0M698.5 592h0M701 586.5h0M689.5 597h0M692.5 592.5h0M700 586h0M694.5 589.5h0M701.5 591h0M672.5 597h0M706.5 590h0"/><path stroke="#C77CFF" d="M646 585.5h0"/><path stroke="#00BE67" d="M670 593h0M673.5 584.5h0M661.5 593.5h0M653.5 594.5h0M689 592.5h0M649.5 599.5h0M675 595h0M654.5 591h0M674 590.5h0M661 592h0M674.5 591h0M663.5 591.5h0M669.5 592h0M675 590h0M663.5 596.5h0M673.5 593.5h0"/><path stroke="#00BFC4" d="M651 592.5h0M673.5 588h0M651.5 597.5h0M652 593h0M668.5 592h0M679.5 587.5h0M666.5 589.5h0M650 591h0M647.5 596h0M646.5 588.5h0"/><path stroke="#7CAE00" d="M666 595.5h0M688 593.5h0M672 592h0M701 585.5h0M665 600.5h0M675.5 594.5h0M676 593.5h0M679.5 596h0M687 592.5h0M671 590h0M695.5 584h0M676 589.5h0"/><path stroke="#CD9600" d="M698 590h0M697.5 586h0M702 590.5h0M696.5 589.5h0M721.5 576.5h0M682.5 595h0M690.5 585h0M693 589h0M699 586.5h0M690.5 591.5h0M722.5 585.5h0M704 595.5h0M687.5 597h0M693 588.5h0M695.5 590.5h0M695.5 585.5h0M689.5 591.5h0M704 589h0M699.5 583h0M691 591h0M687.5 593.5h0M662.5 590.5h0M662.5 588.5h0M696 583.5h0M686.5 596h0"/><path stroke="#00A9FF" d="M648.5 596.5h0M646 588h0M649 598h0M648.5 595h0M651 590.5h0M646.5 587.5h0M658.5 592h0"/><path stroke="#F8766D" d="M732 599h0M736.5 583h0M754 591h0"/><path stroke="#CD9600" d="M662 595h0M693.5 582h0M696.5 583h0M697.5 582.5h0M718.5 586h0M718.5 577.5h0M672.5 583.5h0M685.5 594h0M691 587.5h0M695.5 591.5h0M687.5 599.5h0M719 574.5h0M670 590h0M709 585.5h0M704 586h0M685 592.5h0M700 582.5h0M689.5 590h0M704 582h0M685.5 596h0M700.5 582.5h0M687.5 588.5h0M709 584h0M699.5 580.5h0M687 585h0M682 588.5h0M704 576.5h0M701 577.5h0M695.5 580h0M698 581.5h0M673 595h0M688 586h0"/><path stroke="#F8766D" d="M749 573h0M755 568h0"/><path stroke="#00BFC4" d="M656.5 590h0M646.5 585.5h0M661.5 587.5h0M650 588.5h0M652 590.5h0M651.5 586.5h0M670.5 588.5h0"/><path stroke="#7CAE00" d="M681.5 592.5h0M666 588h0M703 588h0M688 588h0M670.5 591h0M684.5 591h0M682.5 594h0M696 580.5h0M684 589h0M669.5 588.5h0M705 581.5h0M675 581.5h0M685.5 583.5h0"/><path stroke="#C77CFF" d="M647.5 590h0M648 589h0M658 587.5h0"/><path stroke="#00A9FF" d="M654.5 588.5h0M657 590.5h0M658 585h0M658 586.5h0M664 585.5h0"/><path stroke="#00BE67" d="M652 597h0M665.5 591.5h0M658.5 590h0M674 586h0M665 594.5h0M654 587h0M655 582.5h0M655.5 585h0M652.5 589h0M663 585h0M658 581.5h0M675.5 592.5h0"/><path stroke="#00A9FF" d="M654.5 585h0M645.5 580.5h0M646.5 584.5h0M651.5 588h0M660 570.5h0M677 581.5h0M655 578h0M656.5 587h0M646.5 581.5h0M654.5 581h0M647.5 583.5h0M654.5 577h0M648.5 587.5h0M661 582h0"/><path stroke="#7CAE00" d="M696.5 585.5h0M665 582.5h0M665.5 589.5h0M660.5 581h0M657.5 585.5h0M697 580h0M711 577h0M685.5 586.5h0M676.5 584h0M689.5 581.5h0M697.5 585h0"/><path stroke="#00BE67" d="M659.5 581.5h0M681 590h0M652.5 590h0M646.5 583h0M662 584.5h0M680 584.5h0M660 583h0M676.5 575h0M671.5 586.5h0M647.5 585h0M650 587.5h0M658 579h0M654 586.5h0M673.5 577.5h0M667.5 585.5h0"/><path stroke="#CD9600" d="M680 585.5h0M711.5 569h0M710 581h0M692.5 582.5h0M673.5 575.5h0M706 579h0M702.5 582.5h0M691 581.5h0M665 589h0M666 589h0M691.5 579h0M709 584.5h0M687.5 589h0M722.5 574h0M697.5 578.5h0M720.5 575.5h0M704 581h0M701 581h0M684.5 586.5h0M667.5 581h0M707.5 576h0"/><path stroke="#00BFC4" d="M666.5 583h0M650 585h0M662.5 586.5h0M661.5 591.5h0M646.5 582.5h0M672 584h0M652.5 584h0M656.5 581.5h0M648.5 584h0M683 584.5h0M661 585h0M662 584h0"/><path stroke="#F8766D" d="M798 572h0"/><path stroke="#7CAE00" d="M683 587.5h0M677 583.5h0M649 581.5h0M692.5 581h0M703 572.5h0M660.5 580h0M705 566h0M686.5 579h0M686.5 581h0M693.5 579h0M693 578.5h0M661.5 582.5h0M679.5 582.5h0M678.5 578.5h0M701.5 580.5h0M684 583.5h0M719.5 574h0M672.5 576h0"/><path stroke="#00A9FF" d="M648 580.5h0M647 587.5h0M654.5 575.5h0M678 573.5h0M661.5 589h0M653.5 578h0M646.5 581h0M672 574h0M678 580h0M666.5 573h0"/><path stroke="#C77CFF" d="M651.5 581.5h0M665 572.5h0"/><path stroke="#F8766D" d="M766.5 574h0M791.5 560.5h0"/><path stroke="#00BE67" d="M656.5 576h0M684 586h0M659.5 571.5h0M679 585h0M667 577.5h0M655.5 580.5h0M704 574h0M664 581h0M670.5 579h0"/><path stroke="#CD9600" d="M688 579.5h0M696.5 578h0M684 587h0M718.5 573h0M694.5 574.5h0M685 582h0M684.5 587.5h0M718.5 579h0M688 577.5h0M687.5 581.5h0M704 575h0M706 574.5h0M722.5 577.5h0M690 584.5h0M704.5 570h0M700.5 585.5h0M718 570h0M701 571.5h0M700 575h0M705 564.5h0M693 584.5h0M710.5 579h0"/><path stroke="#00BFC4" d="M648 583h0M656 580.5h0M653.5 582h0M676 580h0M660 578.5h0M680.5 577.5h0M670.5 580.5h0M668 582.5h0M661 571h0M663.5 579h0"/><path stroke="#FF61CC" d="M652 581.5h0"/><path stroke="#7CAE00" d="M676 587h0M694 580.5h0M687.5 576h0M685.5 579.5h0M653 578.5h0M693.5 578h0M684.5 580h0M698.5 571.5h0M683.5 577.5h0M711 566h0M701.5 569h0"/><path stroke="#CD9600" d="M696.5 577h0M719 559.5h0M706 564.5h0M712 567h0M683 582h0M702 579h0M694 573.5h0M687 575h0M705.5 572.5h0M708 578h0M702.5 569.5h0M712.5 571h0M684.5 573h0M718.5 562h0M684 575h0M691 574.5h0M684 576.5h0M707 553h0M702.5 574.5h0M724 570.5h0M721 561.5h0M711 559h0M698.5 577h0M698 575.5h0M722 583h0M701 570h0M701 577h0M681.5 581h0M696 577.5h0"/><path stroke="#00A9FF" d="M646.5 567h0M648.5 586.5h0M657.5 574h0M646 578h0M667.5 573.5h0M646 569h0"/><path stroke="#FF61CC" d="M665 570.5h0"/><path stroke="#C77CFF" d="M655.5 574.5h0M646.5 574.5h0M648 576.5h0"/><path stroke="#00BFC4" d="M670.5 583.5h0M661.5 579h0M646 563.5h0M653 580h0M647.5 582.5h0M676.5 577h0M670 577.5h0M657.5 570.5h0M671.5 575.5h0M673.5 572h0M666.5 570.5h0"/><path stroke="#F8766D" d="M773 563h0"/><path stroke="#00BE67" d="M669 584.5h0M646.5 575.5h0M683.5 580h0M661 568h0M679.5 576.5h0M650 581h0M683 579.5h0M651.5 575.5h0M692.5 575.5h0M684 573.5h0M692.5 572.5h0M669.5 576h0"/><path stroke="#00BFC4" d="M667 579.5h0M666 575h0M668 564.5h0M646.5 573h0M660.5 565.5h0M671 566.5h0M661.5 575.5h0M671 565.5h0M659.5 564.5h0"/><path stroke="#C77CFF" d="M649.5 577h0M660.5 560h0M661.5 569.5h0"/><path stroke="#00A9FF" d="M648 575.5h0M646.5 571.5h0M656 573h0M678 572h0M650.5 576h0M669 575h0M670 574.5h0M667 566h0M657 568.5h0"/><path stroke="#CD9600" d="M719 561.5h0M706.5 574.5h0M683 577h0M719 565.5h0M705 573.5h0M708.5 561.5h0M702.5 575.5h0M686 577.5h0M719.5 564h0M704.5 568.5h0M649 573h0M699.5 569.5h0M720 567h0M679.5 568.5h0"/><path stroke="#F8766D" d="M791 570h0M794 561.5h0M731.5 564.5h0M763 563h0"/><path stroke="#7CAE00" d="M710.5 571h0M680.5 582.5h0M697.5 574h0M683.5 575h0M655.5 570h0M686 571.5h0M698 572h0M694.5 562h0M684.5 572h0M692.5 567h0M661.5 570.5h0M710.5 560.5h0"/><path stroke="#00BE67" d="M663.5 576.5h0M662.5 573.5h0M691.5 572.5h0M696.5 562.5h0M659 575h0M647.5 573.5h0M692.5 571.5h0M649.5 578.5h0M671.5 571.5h0M649 575.5h0M685 572h0M668.5 567.5h0M694 569h0M654.5 572h0M661.5 574h0M670.5 569.5h0M695 572h0M697 561h0M662.5 575.5h0M709 552h0M652 572h0M668 570.5h0M661.5 568h0"/><path stroke="#00A9FF" d="M676 551.5h0M680.5 569.5h0M652.5 570h0M651.5 563h0M672 567h0M678.5 569.5h0M661.5 565h0M660.5 561h0M652 569h0"/><path stroke="#C77CFF" d="M668.5 573.5h0M657 559h0M646.5 568.5h0M647 570h0M649 571h0"/><path stroke="#00BE67" d="M675.5 568.5h0M673 580.5h0M704 555.5h0M669.5 571h0M676 571h0M681.5 571.5h0M686 569.5h0M679.5 574h0M689 574.5h0M689 576.5h0M693 560.5h0M691 571.5h0M659.5 576.5h0M665 569h0M661 572.5h0"/><path stroke="#7CAE00" d="M683.5 573h0M697.5 577h0M698 569.5h0M694.5 566.5h0M704 570h0M670.5 563.5h0M683 574.5h0M706.5 562.5h0M676 566.5h0M701 568h0M697 567.5h0M694 564.5h0M700 568h0M686.5 568h0M702 565.5h0"/><path stroke="#00BFC4" d="M646.5 565h0M662.5 564h0M666 578h0M675.5 573.5h0M655.5 568.5h0M674.5 571h0M665 575h0M667.5 579h0M664.5 563h0M662 571h0M662 567.5h0M654 575h0M649 569h0M658 566h0M677.5 566h0"/><path stroke="#CD9600" d="M703.5 565.5h0M683.5 572h0M696 569h0M684.5 570.5h0M693 566.5h0M714.5 559h0M689 568h0M691 569.5h0M689 571.5h0M688.5 568h0M681 576.5h0M722 566.5h0M696 559h0M704.5 566h0M704 561.5h0"/><path stroke="#00BE67" d="M653 571h0M673 568.5h0M672 562.5h0M678 565.5h0M659.5 562h0M669 563h0M692.5 563h0M671.5 568h0M687.5 566h0M682.5 567.5h0M673.5 566.5h0M654 565h0M692.5 570h0M679.5 571h0M663 559.5h0M665 564h0M689.5 573h0"/><path stroke="#CD9600" d="M683.5 569.5h0M680 569.5h0M702 561.5h0M699 568.5h0M691 570h0M691.5 564.5h0M702 560.5h0M721.5 560h0M721 569h0M698.5 562h0M698.5 559h0M699 563.5h0M701.5 559h0M699.5 566.5h0M725 561h0M709 565.5h0M690 576.5h0"/><path stroke="#00A9FF" d="M656.5 565h0M651 573h0M653 565.5h0M661.5 561.5h0M655 562.5h0M654.5 567.5h0M647 565.5h0"/><path stroke="#C77CFF" d="M658 558.5h0M647 566.5h0M649.5 564h0M662.5 560h0M651 561.5h0M649.5 569.5h0"/><path stroke="#7CAE00" d="M694 563.5h0M694.5 573h0M709 564.5h0M688.5 573h0M687 570h0M672.5 565h0M697.5 570h0M695 565h0M662.5 566.5h0M684.5 568h0M684.5 568.5h0M709.5 557.5h0M675.5 565h0M666 569h0M718 567h0M689.5 566h0"/><path stroke="#00BFC4" d="M650 566h0M669.5 578h0M658 567h0M673 566.5h0M650 567h0M654.5 561.5h0M676 561h0"/><path stroke="#F8766D" d="M763 559.5h0"/><path stroke="#FF61CC" d="M651.5 562h0M646.5 566h0M658 563h0"/><path stroke="#00BE67" d="M677.5 568.5h0M673 560h0M673 558.5h0M697 565h0M679 566.5h0M657.5 561.5h0M649.5 563.5h0M677 563.5h0M665.5 569.5h0M682 559h0M693 558h0M697 559.5h0"/><path stroke="#7CAE00" d="M673.5 571h0M691 563h0M700.5 562h0M710 561.5h0M679 562h0M688.5 561.5h0M688.5 565h0M707 547h0M678.5 559.5h0M693 561.5h0M683 567h0M719 556h0M682.5 560h0M702.5 557h0M704 560h0M718.5 551.5h0M681.5 562h0M674.5 564h0M690.5 557.5h0M709 554.5h0"/><path stroke="#00A9FF" d="M670.5 561h0M669.5 556h0M673 563h0M646.5 556h0M668.5 546h0M646.5 559.5h0M649 561.5h0M664 560.5h0M654 558h0M648.5 560.5h0"/><path stroke="#00BFC4" d="M678 562.5h0M655 554h0M668.5 557h0M666 565.5h0M683 566.5h0M657.5 555h0M656 558h0M667.5 557.5h0M674.5 558.5h0"/><path stroke="#CD9600" d="M722 566h0M712.5 566h0M722 576.5h0M699.5 562h0M694 558.5h0M719.5 569.5h0M725.5 554.5h0M681.5 577h0M702.5 567.5h0M681.5 563h0M683 563.5h0M719.5 556h0M718 555h0M722 554.5h0M679.5 552h0M700.5 561.5h0M683 566h0M700.5 560.5h0M710 556.5h0M697.5 557.5h0"/><path stroke="#FF61CC" d="M648 564h0"/><path stroke="#F8766D" d="M790 557h0"/><path stroke="#C77CFF" d="M646.5 563h0"/><path stroke="#00A9FF" d="M661 558h0M670.5 556.5h0M656.5 550.5h0M664.5 566.5h0M652.5 556.5h0M654.5 544h0M666 560.5h0M648 560.5h0M647.5 561.5h0M653 562.5h0M662 546h0M677.5 549h0M649.5 559h0M677.5 558.5h0"/><path stroke="#FF61CC" d="M664 558.5h0"/><path stroke="#CD9600" d="M719 552h0M695.5 565h0M676 552.5h0M724 551h0M700.5 563.5h0M720 558h0M722.5 547.5h0M692 562.5h0M718 550.5h0M709 557h0M718 544.5h0M711.5 546h0M720.5 551.5h0M709.5 553.5h0M707.5 558.5h0M719.5 562h0M698 556h0M691.5 560h0M714 551.5h0M701.5 555h0M712 544.5h0"/><path stroke="#00BE67" d="M694.5 554.5h0M688 558.5h0M657.5 554.5h0M667 563h0M669.5 553h0M684 560.5h0M690.5 562.5h0"/><path stroke="#C77CFF" d="M646.5 562.5h0M646.5 554h0M656 553.5h0M661.5 556h0"/><path stroke="#00BFC4" d="M646.5 560.5h0M684 567h0M673 562h0M654.5 562.5h0M648.5 566h0M672.5 555.5h0M693.5 556.5h0M666.5 555h0M669.5 543.5h0M668 558.5h0M677 555h0M663 557.5h0"/><path stroke="#F8766D" d="M770 546h0"/><path stroke="#7CAE00" d="M710.5 548.5h0M683.5 561h0M686.5 561.5h0M679.5 565.5h0M707.5 554.5h0M666 563.5h0M699 559.5h0M671 557h0M709 549h0M683 560.5h0M675.5 557.5h0M722 548.5h0M667.5 560h0M684.5 559.5h0"/><path stroke="#C77CFF" d="M675.5 549.5h0M656 548h0M664.5 553.5h0M666.5 552h0"/><path stroke="#7CAE00" d="M677.5 546.5h0M692 554.5h0M684 563h0M671 558h0M667.5 553h0M686 559.5h0M706.5 560h0M681 557.5h0M701 555.5h0M686.5 559h0M698 551.5h0M708 550h0M700 555.5h0M682.5 556.5h0M704 558.5h0M676.5 545.5h0M674 546.5h0M686 563h0M692 556h0M686 564.5h0M686 565h0M687.5 556h0M683 556h0M688 554h0M706 543h0"/><path stroke="#00A9FF" d="M659 555h0M669.5 552.5h0M668 552.5h0M648 555.5h0M661 555h0M660 532.5h0M652 561h0M663 554h0"/><path stroke="#F8766D" d="M742 551.5h0"/><path stroke="#CD9600" d="M708 546h0M690 556.5h0M718 535h0M681.5 551.5h0M704 548h0M719 554.5h0M724.5 546h0M719 558h0M703.5 558.5h0M705.5 561h0M718 549.5h0M691.5 562.5h0M694 552.5h0M706.5 546h0M724 545.5h0"/><path stroke="#00BFC4" d="M676 559h0M666.5 558.5h0M650.5 558h0M674.5 554h0M658 555h0M666 556.5h0M647.5 554.5h0M653.5 545h0M694.5 551.5h0M665.5 536h0"/><path stroke="#00BE67" d="M689 556h0M684.5 564h0M647.5 557.5h0M672 554.5h0M679 556h0M699 552.5h0M666.5 561h0M680 557h0M664.5 555h0M689.5 555h0M693 555.5h0"/><path stroke="#00BFC4" d="M702.5 549.5h0M670.5 549.5h0M663.5 553h0M653 550.5h0M685 557.5h0M672 548h0M653 555.5h0M672.5 549h0M679.5 553.5h0M695.5 548h0M663 548h0M681 553.5h0"/><path stroke="#00A9FF" d="M682.5 551.5h0M646.5 552h0M648 550.5h0M663 543.5h0M647.5 547.5h0M654.5 552.5h0M663.5 553.5h0M656 547h0M672.5 535.5h0M663 558h0M666.5 546.5h0"/><path stroke="#F8766D" d="M790 547h0"/><path stroke="#FF61CC" d="M646.5 548.5h0"/><path stroke="#00BE67" d="M683 557.5h0M661 552.5h0M697.5 555h0M673 558h0M682 549.5h0M694 549h0M693.5 546h0M694.5 553h0M684 557h0M679 547.5h0M672.5 550.5h0M695 549h0M694.5 544.5h0"/><path stroke="#7CAE00" d="M716 547h0M690 560h0M697 546.5h0M691.5 550h0M684 559h0M660 553h0M702 546h0M682.5 555h0M704 551h0M708 543h0M701 561h0M683.5 556h0M674.5 562.5h0M701 549.5h0M681 544.5h0M701 548.5h0"/><path stroke="#CD9600" d="M718.5 554h0M697.5 555.5h0M722 547.5h0M707 540h0M683 558.5h0M702.5 546h0M712.5 555h0M697 550h0M718.5 546.5h0M719 550h0"/><path stroke="#C77CFF" d="M656 534.5h0M647.5 556h0M653 556h0M653.5 548h0M648 553h0M650.5 548h0M660.5 550.5h0M661.5 554.5h0M652 555.5h0M647 548.5h0"/><path stroke="#FF61CC" d="M674.5 532.5h0M646.5 549h0M668.5 542.5h0"/><path stroke="#00A9FF" d="M668 536h0M670.5 552h0M670 543.5h0M646.5 555h0M653 554h0M656.5 542h0M666 546h0M658 538.5h0M655.5 541.5h0M646.5 549.5h0M646.5 561.5h0M711 545h0M648 552.5h0M645.5 545h0M646.5 528.5h0M676 553.5h0M673.5 543h0"/><path stroke="#00BFC4" d="M659 539h0M677.5 544.5h0M650 551h0M668 551.5h0M680.5 547h0M659.5 543h0M670.5 542.5h0M656.5 533.5h0M659.5 548h0M666 549h0M646 542.5h0M674.5 551.5h0"/><path stroke="#00BE67" d="M701 547.5h0M658 545h0M669.5 547h0M681.5 546.5h0M678 543h0M710.5 545h0M685 552.5h0M668 549.5h0M701 552.5h0M682.5 553h0M677.5 554h0M686.5 556h0"/><path stroke="#7CAE00" d="M722 546h0M700.5 549h0M707.5 552.5h0M709 546h0M708.5 537.5h0M683 551h0M696 558.5h0"/><path stroke="#C77CFF" d="M651 550.5h0M660.5 540h0M653 548h0M660.5 545.5h0M646.5 557.5h0M663 550h0M671.5 545.5h0"/><path stroke="#CD9600" d="M718.5 547.5h0M691.5 551.5h0M730 536h0M709.5 542.5h0M719 548h0M704 557.5h0M723.5 538.5h0M703 544.5h0M719.5 545.5h0M692.5 545h0M719 547.5h0M718 543.5h0M720.5 548h0M719.5 553h0M695 544h0M722.5 538h0"/><path stroke="#C77CFF" d="M653.5 546h0M667 540.5h0M668.5 552.5h0M646.5 543h0M648.5 542h0"/><path stroke="#7CAE00" d="M684 553.5h0M682.5 550.5h0M689.5 548.5h0M691.5 548h0M722.5 544.5h0M697 548.5h0M708 551.5h0M692 546h0M701 547h0M689 552.5h0M700.5 544h0M704 552.5h0M679.5 549h0M701.5 539.5h0"/><path stroke="#FF61CC" d="M668 547h0M665 545h0M653.5 543h0M651.5 550.5h0"/><path stroke="#00BFC4" d="M681 548h0M681 533.5h0M680.5 543.5h0M682 546h0M706.5 543h0M672.5 553.5h0M682.5 544.5h0M683 546h0M667 534h0"/><path stroke="#00BE67" d="M667 542.5h0M679 542.5h0M647 551h0M678 534.5h0M682.5 553.5h0M686.5 553.5h0M700 546.5h0M702.5 543h0M690 541.5h0M712.5 528h0M676 547.5h0M699.5 545h0"/><path stroke="#00A9FF" d="M661 541h0M650.5 553.5h0M675.5 544.5h0M646 534.5h0M646.5 542.5h0M661 540.5h0M664.5 546h0M663.5 543h0M653.5 542h0M680 536.5h0M665 537h0M651 543.5h0"/><path stroke="#CD9600" d="M687.5 550h0M689 545.5h0M705.5 549.5h0M688 546.5h0M683 550h0M702 544h0M710 540h0M702.5 542.5h0M697 544h0M690 550.5h0M698 545.5h0M709.5 542h0M734 532.5h0M721 551h0M712 537.5h0M738 532.5h0M721.5 542.5h0M724.5 543h0"/><path stroke="#7CAE00" d="M693 537h0M712 543.5h0M682 534.5h0M694.5 539h0M699 538.5h0M683 544h0M704 537.5h0M686 549.5h0M685.5 544.5h0M728.5 532.5h0M699 540.5h0M697.5 540.5h0M689.5 540.5h0M689.5 543.5h0"/><path stroke="#C77CFF" d="M657.5 550h0M653.5 540.5h0M648.5 543.5h0M647 546h0M661.5 538.5h0M653 553h0M662.5 540.5h0"/><path stroke="#00BE67" d="M687 548h0M690 538h0M665.5 544h0M671 546.5h0M647 544.5h0M705.5 546.5h0M684.5 547h0M701 537h0M703.5 543h0M699 546h0M671 542h0"/><path stroke="#00BFC4" d="M655.5 540.5h0M658 538h0M672 537h0M651.5 541h0M682.5 543h0M659.5 537h0M667.5 542h0M682.5 535h0M680.5 541.5h0M665 547.5h0M688 549.5h0M692 541h0"/><path stroke="#FF61CC" d="M664.5 550.5h0M659.5 538h0M651 546.5h0"/><path stroke="#CD9600" d="M723 540h0M718 540.5h0M710 534.5h0M708.5 535h0M711.5 542h0M734.5 539.5h0M725 536h0M694.5 540h0M711 543.5h0M699 547.5h0M719 540.5h0M718.5 539h0M733 530h0M710 541.5h0"/><path stroke="#F8766D" d="M806 532h0M807 536h0"/><path stroke="#00A9FF" d="M652 546.5h0M660 548.5h0M674.5 532h0M649 545.5h0M660.5 543.5h0M676 534.5h0M653 533.5h0M661.5 539h0M664.5 542h0M671 535.5h0M675 527h0"/><path stroke="#CD9600" d="M722 543h0M711 536h0M712 533.5h0M698.5 533h0M728 526.5h0M718 542.5h0M720.5 544h0M722.5 540.5h0M727 535h0M721 538h0M711 526.5h0M725 534h0M691.5 534h0M718.5 537h0"/><path stroke="#00BE67" d="M668 541.5h0M664.5 539.5h0M655 519h0M683 549h0M673 542h0M688 545.5h0M682 540.5h0M697 539h0"/><path stroke="#C77CFF" d="M661.5 534.5h0M646.5 537.5h0M665 531h0M670.5 535h0M646 531h0M662 531h0M675.5 529.5h0M661 532.5h0"/><path stroke="#FF61CC" d="M664 536.5h0M669 534.5h0M659 533h0M666.5 528.5h0"/><path stroke="#00BFC4" d="M685.5 547.5h0M676 537.5h0M684 544h0M679.5 539h0M676.5 533h0M656.5 537h0M676 538h0M664 533h0M662.5 527h0M675 522h0M699 542.5h0M694 542.5h0M661.5 542h0M671 539.5h0M678 542.5h0M661.5 529h0M674.5 541.5h0M663.5 533h0"/><path stroke="#7CAE00" d="M677.5 540h0M684.5 543.5h0M707.5 537h0M692 543.5h0M673 540h0M699 550h0M699 541h0M690 537h0M697 542.5h0M702.5 538.5h0M722 537.5h0M683.5 537.5h0M697.5 538.5h0"/><path stroke="#00A9FF" d="M670 539h0M646.5 538.5h0M676 530h0M669.5 529.5h0M660 535.5h0M647 547h0M682 538h0M653 538h0M649.5 532.5h0"/><path stroke="#CD9600" d="M725.5 527.5h0M689 537.5h0M718 532h0M718.5 539.5h0M711.5 537.5h0M738 517.5h0M686 538.5h0M733.5 528.5h0M721 537.5h0M707.5 535h0"/><path stroke="#FF61CC" d="M647.5 532.5h0M647 529h0M650 535.5h0"/><path stroke="#C77CFF" d="M688 532.5h0M647 523h0M648.5 532h0M655 526.5h0M656 526h0M648.5 541h0M666.5 526.5h0M651 538.5h0M661.5 533h0M646.5 531h0M648 524.5h0"/><path stroke="#00BE67" d="M702 537h0M699.5 541.5h0M674 543h0M683 540.5h0M702.5 533.5h0M704.5 533.5h0M683 548.5h0M684.5 542.5h0M706.5 538.5h0M677 533h0M705.5 540h0M685.5 543h0M695.5 535h0M671 534h0M677 527.5h0M683 536h0M682.5 534h0"/><path stroke="#7CAE00" d="M698.5 538h0M722.5 535.5h0M702 529h0M692.5 536h0M689 539.5h0M700.5 536h0M705.5 541h0M702.5 527.5h0"/><path stroke="#00A9FF" d="M657.5 524.5h0M647.5 538h0M680 532h0M676.5 528.5h0M668 534.5h0M670 534h0M652.5 536h0M651.5 534.5h0M648 539.5h0M660 534.5h0M647 535h0M656.5 522.5h0M679.5 530.5h0M650 534.5h0"/><path stroke="#F8766D" d="M826 531h0"/><path stroke="#00BFC4" d="M688 534h0M675.5 530h0M684 541.5h0M663.5 528h0M686 540h0M700 536.5h0M678.5 532h0M697.5 537.5h0M678.5 536.5h0M696.5 538h0"/><path stroke="#00A9FF" d="M647 526h0M663 537.5h0M647 537.5h0M656.5 525.5h0M648 531h0M651 530h0M665.5 527h0M659.5 528.5h0M654.5 531h0M646 535.5h0M651.5 528.5h0M655.5 532.5h0M649.5 528h0M653.5 531h0"/><path stroke="#7CAE00" d="M737 524h0M719 538.5h0M704.5 535.5h0M706.5 531h0M698.5 537h0M687.5 535h0M707 529h0M693 534.5h0M683 532h0M719.5 535.5h0M708 526.5h0"/><path stroke="#00BE67" d="M684 543h0M683 543h0M683 534.5h0M706 528h0M698.5 531h0M694.5 532.5h0M674 540h0M686 537h0M687.5 542.5h0M705.5 529.5h0M710.5 528.5h0M688.5 538h0M697.5 533.5h0"/><path stroke="#C77CFF" d="M654.5 521h0M655 529h0M646.5 530h0M678.5 522.5h0M647 530.5h0M647.5 527.5h0"/><path stroke="#CD9600" d="M732.5 520h0M717.5 530.5h0M724.5 526h0M734 524.5h0M718.5 535.5h0M726 525h0M706 535.5h0M719.5 529h0M693 539.5h0M730.5 526.5h0M731 526.5h0M706.5 534h0M727.5 530h0M721.5 534h0M724.5 530.5h0M730.5 522h0"/><path stroke="#00BFC4" d="M684 537.5h0M664.5 530.5h0M683 533h0M678.5 520.5h0M681 517.5h0M680.5 531.5h0M686 536h0M712 523h0M710.5 531.5h0"/><path stroke="#FF61CC" d="M662.5 537.5h0M647 536.5h0M651.5 524h0M678 525h0M669 533h0"/><path stroke="#FF61CC" d="M656 515.5h0M668.5 534h0M656 531.5h0"/><path stroke="#CD9600" d="M729 529.5h0M738.5 516h0M723.5 530h0M709.5 525h0M722 528h0M720.5 529.5h0M727.5 533h0M712.5 530h0M727 524h0M733.5 512h0M719 525.5h0M735.5 522h0M718 509.5h0M732.5 514.5h0M697 523.5h0M710 530.5h0"/><path stroke="#00BE67" d="M693 531.5h0M684 535.5h0M681 515h0M709 521h0M720 537.5h0M684 532.5h0M682 518h0M694 531h0M680 530h0M698 530h0"/><path stroke="#00A9FF" d="M702 524.5h0M653.5 537h0M661 529h0M666.5 517.5h0M661.5 520h0M680 527h0M663.5 524h0M661 533h0M671.5 516.5h0M681 525.5h0M653 519.5h0"/><path stroke="#F8766D" d="M772 523h0"/><path stroke="#7CAE00" d="M687 532.5h0M706 524.5h0M701.5 532.5h0M712.5 521.5h0M691.5 536h0M685.5 533h0M696.5 532.5h0M701 522.5h0"/><path stroke="#C77CFF" d="M647 522.5h0M661.5 523.5h0M648 517.5h0M647 540.5h0M678 515h0M664 519.5h0M681.5 514h0M670.5 527.5h0M649.5 522.5h0M663 516h0"/><path stroke="#00BFC4" d="M689.5 531.5h0M696.5 525.5h0M676.5 525.5h0M688 527h0M687 538.5h0M677.5 516h0M691.5 526h0M661.5 525h0M684.5 535.5h0M699 527h0M708.5 524h0M695.5 527h0M672.5 519h0M711 520h0M681 520h0"/><path stroke="#CD9600" d="M725.5 521.5h0M719 525h0M731 522h0M731.5 512.5h0M727.5 523.5h0M707.5 522.5h0M718.5 524.5h0M682 515.5h0M719 531.5h0M718.5 524h0M752 508h0M742 519h0M725 522h0M736 516.5h0M698.5 525h0M718.5 523h0M761.5 514h0M718.5 527.5h0M720.5 526h0M689 529h0"/><path stroke="#00BE67" d="M704 530h0M691 537h0M695.5 529h0M692 525h0M668 522.5h0M684.5 536.5h0M701 526h0M670.5 518.5h0M691.5 531.5h0M711.5 527.5h0M690 518h0M689 526h0"/><path stroke="#00A9FF" d="M669.5 518h0M654 518.5h0M699.5 528.5h0M687 522.5h0M650.5 519h0M671 523.5h0M659.5 522h0M674.5 516h0M647 515h0M653 516.5h0M661 520.5h0M663 522h0M668 526.5h0M695.5 523.5h0"/><path stroke="#C77CFF" d="M669.5 525h0M673 514.5h0M664.5 525.5h0M650.5 520h0M659.5 520.5h0M650 529h0"/><path stroke="#FF61CC" d="M667.5 518.5h0M646.5 526.5h0M647 535.5h0M674.5 518.5h0M665 531.5h0"/><path stroke="#7CAE00" d="M683 531.5h0M721 532h0M724 528h0M690.5 524h0M700.5 526h0M689.5 523h0M705 525h0M694.5 525.5h0M699 525h0M693 517h0M729 514h0"/><path stroke="#00BFC4" d="M697.5 536h0M688 529.5h0M715.5 523.5h0M663.5 523h0M666.5 514.5h0M677 520h0"/><path stroke="#7CAE00" d="M710.5 513h0M718 521h0M681.5 526h0M692 518.5h0M706.5 505h0M689 515.5h0M685 525.5h0M707 513.5h0M706 523.5h0M691.5 521.5h0M684 532h0M730 519h0M710.5 526.5h0"/><path stroke="#C77CFF" d="M648 518.5h0M670 511h0M663.5 515h0M650 508h0M659 508.5h0M653 523h0M709.5 510.5h0"/><path stroke="#00BE67" d="M686 530h0M698 521h0M682 520.5h0M690 521h0M700.5 528.5h0M699.5 524h0M690.5 522h0M687 519h0M674.5 521h0M683.5 526h0"/><path stroke="#FF61CC" d="M650 525.5h0M648.5 515h0M648 521h0M651.5 512h0"/><path stroke="#CD9600" d="M711 513.5h0M719 528.5h0M707.5 531.5h0M747 511.5h0M724 532h0M718 511.5h0M694.5 522.5h0M718 534h0M732 514.5h0M711 524.5h0M703.5 522.5h0M692.5 507.5h0M724 525h0M725.5 523.5h0M733 514h0M737.5 515h0M726.5 505.5h0"/><path stroke="#00A9FF" d="M658.5 525.5h0M657.5 516.5h0M687.5 519h0M660 521.5h0M652 527h0M668 518.5h0M669 511h0M659 509.5h0M683.5 528h0M648.5 517h0M678 512.5h0M691.5 520h0"/><path stroke="#00BFC4" d="M692.5 527h0M677.5 522h0M682.5 529h0M702.5 528h0M699 521h0M702 519h0M683 525.5h0M668.5 530.5h0M697 520.5h0M673 523.5h0M699 519.5h0"/><path stroke="#00BE67" d="M684 522h0M696 521h0M688 516.5h0M686 526.5h0M705.5 522.5h0M701.5 517.5h0M707 518.5h0M685.5 520h0M681.5 513h0M706 519h0M715.5 516.5h0"/><path stroke="#7CAE00" d="M718 513.5h0M687 525h0M718 514h0M703 516.5h0M698.5 516.5h0M696 513h0M710.5 512.5h0M694.5 518h0M694.5 519.5h0M709.5 508h0M730.5 507.5h0"/><path stroke="#00BFC4" d="M683 527.5h0M699.5 519.5h0M694.5 524h0M683 519.5h0M682 515h0M676 513.5h0M694 515h0M694 518.5h0M653 522.5h0M674 510h0M697 514.5h0M697.5 514h0M665.5 513.5h0M686 522.5h0"/><path stroke="#CD9600" d="M734 527h0M703 520.5h0M721 523.5h0M791 508h0M722 517.5h0M748.5 508.5h0M732.5 508h0M734 499h0M709.5 516.5h0M718 507.5h0M725 519h0M729 515.5h0M722 522h0M720 524h0M719 524.5h0M719 522h0M701 521h0M725 522.5h0M718.5 512.5h0M727.5 512h0M726.5 507.5h0M736 515h0M718 519.5h0"/><path stroke="#00A9FF" d="M650 521.5h0M670.5 506h0M646.5 511h0M677.5 513h0M691 522h0M650 518h0M651 515h0"/><path stroke="#C77CFF" d="M647 503h0M647.5 511.5h0M653 501h0M676.5 521.5h0M655 521.5h0M699.5 511h0M682.5 517.5h0"/><path stroke="#FF61CC" d="M696 513.5h0"/><path stroke="#00A9FF" d="M663 504h0M692 509h0M648.5 509h0M704 507.5h0"/><path stroke="#CD9600" d="M721.5 521h0M727 510.5h0M735.5 510h0M733.5 503.5h0M727 514.5h0M707.5 513h0M728 508.5h0M718.5 514h0M725 517.5h0M725 511.5h0M768 505.5h0M719 519.5h0M736 501h0M718 505h0M719 523h0M736.5 511.5h0M721 516.5h0M718.5 511.5h0M725.5 510h0M721.5 516h0M739.5 514h0M735 517.5h0M731 499.5h0M722 513h0"/><path stroke="#C77CFF" d="M663.5 510.5h0M651.5 525.5h0M647 514h0M663 518h0M654.5 509.5h0"/><path stroke="#00BE67" d="M701 517h0M682 527h0M709 518.5h0M698.5 514.5h0M699 518.5h0M689.5 524h0M682.5 516h0M693 515h0M689.5 500h0M706 511.5h0M682.5 515h0M701.5 514h0M698 514h0M684.5 519h0M692 525.5h0"/><path stroke="#FF61CC" d="M650 502h0M647.5 509h0M652.5 498h0M646.5 505.5h0M653 516h0"/><path stroke="#F8766D" d="M790 522h0"/><path stroke="#00BFC4" d="M691.5 529h0M671.5 518h0M673.5 509h0M697.5 518h0M703 507h0M707.5 512h0M675 517h0M707.5 510h0M712 508.5h0M683 518.5h0"/><path stroke="#7CAE00" d="M687.5 518h0M684 521h0M700.5 517.5h0M721.5 518.5h0M710.5 503.5h0M706.5 506h0M690.5 511h0M695.5 517.5h0M688 509.5h0M698 510.5h0"/><path stroke="#00A9FF" d="M684.5 518.5h0M655 508.5h0M672 513h0M666.5 496.5h0"/><path stroke="#00BE67" d="M708.5 497h0M690.5 525h0M683 515h0M689.5 512.5h0M705.5 507.5h0M706 514.5h0M696.5 510.5h0M682 510h0M685 513h0M694.5 506.5h0M689.5 515h0M704.5 498.5h0M714 517.5h0M704 503.5h0"/><path stroke="#C77CFF" d="M677.5 503.5h0M663 517h0M674 502.5h0M681.5 508.5h0M651.5 500.5h0M647.5 498.5h0M679.5 500.5h0"/><path stroke="#00BFC4" d="M694.5 513h0M701.5 505h0M697.5 513h0M662.5 513h0M704.5 505h0M683 515.5h0M682.5 511.5h0M691.5 514.5h0M687 512h0M668 517.5h0M647 498.5h0M683 509.5h0"/><path stroke="#CD9600" d="M723.5 513h0M725 514h0M703 510h0M719.5 519.5h0M719 518h0M721 512h0M723.5 511h0M720.5 516h0M737 502.5h0M720 516.5h0M715 499.5h0M725.5 508h0M698 512h0M741.5 504h0M723 520.5h0M719 511h0M790 497.5h0M710 506.5h0M718.5 506.5h0M700.5 508h0M723.5 515h0M721 511.5h0"/><path stroke="#FF61CC" d="M663 511h0M651.5 513h0"/><path stroke="#7CAE00" d="M736 496h0M684.5 516.5h0M694 508.5h0M688 513h0M705.5 513.5h0M711.5 494.5h0M734 512h0M718.5 515.5h0M682.5 513h0M730.5 512.5h0M705.5 517h0M687.5 510h0M719 513h0"/><path stroke="#7CAE00" d="M740 493.5h0M693 512.5h0M715.5 518h0M686 509h0M697.5 506h0M695.5 506.5h0M718.5 509h0M701.5 503.5h0M687.5 516h0"/><path stroke="#00A9FF" d="M692.5 505h0M676.5 500h0M689 503.5h0M650 512h0M665 512.5h0M656 499h0M685 513.5h0M698 504.5h0M649.5 503.5h0M653.5 488h0"/><path stroke="#00BFC4" d="M665.5 503h0M697.5 511.5h0M683.5 514.5h0M662.5 511.5h0M707.5 499.5h0M704 501.5h0M690.5 506h0M699 508h0M684.5 506.5h0M695.5 493.5h0M702 510.5h0M699 504h0M701.5 499.5h0M681.5 505.5h0M698.5 503h0"/><path stroke="#CD9600" d="M698 513.5h0M719 515.5h0M719 514h0M733.5 492.5h0M742.5 510.5h0M730 502.5h0M718.5 507h0M732.5 498h0M718.5 510h0M718 518h0M734.5 506h0M728.5 510.5h0M736 495h0"/><path stroke="#FF61CC" d="M649 508h0M652 505.5h0M657.5 498.5h0M674 504.5h0M681 501.5h0M648.5 499.5h0M648 505h0M647 503.5h0"/><path stroke="#C77CFF" d="M665 504.5h0M658.5 503.5h0M659.5 509.5h0M664.5 507h0M665 497.5h0M664 501.5h0M665.5 523.5h0M664 515.5h0M656 505.5h0"/><path stroke="#00BE67" d="M709.5 507.5h0M682 522.5h0M711.5 505h0M710.5 508h0M702 503.5h0M684 509h0M684.5 510h0M711 496h0M691.5 502.5h0M707.5 496h0"/><path stroke="#00BFC4" d="M683.5 509h0M684.5 505h0M706 494.5h0M687.5 509h0M713 496h0M681 499h0M708 493h0M707 497.5h0M710.5 506.5h0M688.5 495.5h0M695.5 503h0"/><path stroke="#00A9FF" d="M683 507.5h0M668 498h0M675 490.5h0M653.5 505h0M656.5 506h0M673.5 505.5h0"/><path stroke="#CD9600" d="M705 509.5h0M746.5 499.5h0M722 511.5h0M724 505h0M745 489.5h0M736.5 482.5h0M730 494h0M720.5 510.5h0M737 497.5h0M727 498.5h0M750.5 492.5h0M739 488.5h0M718 499h0M723 507h0M718 502.5h0M735 499.5h0M720.5 507.5h0M736.5 494h0M748.5 484h0M724 510.5h0M724.5 498h0M732.5 497h0"/><path stroke="#7CAE00" d="M719 507h0M693.5 509.5h0M732 495.5h0M707.5 503h0M727.5 501h0M722.5 503h0M718 495.5h0M718 500h0M718.5 499h0M693 504.5h0"/><path stroke="#C77CFF" d="M661.5 501.5h0M650 505h0M666.5 501h0M646.5 491h0M654.5 498h0M682.5 503.5h0"/><path stroke="#FF61CC" d="M663 519h0M647 513.5h0M647 496h0M666.5 494h0M646.5 484.5h0M676 501.5h0M672.5 497.5h0"/><path stroke="#00BE67" d="M655 510.5h0M710.5 484h0M712.5 499h0M682 506.5h0M686 504.5h0M703.5 513h0M727 504h0M683 511.5h0M698 502h0M704.5 497.5h0M684 505h0M695.5 499.5h0"/><path stroke="#7CAE00" d="M690 500.5h0M713 502h0M722.5 498h0M723 501h0M699.5 495h0M727.5 495.5h0M721 498.5h0M732 501.5h0M704.5 491h0M738.5 489h0M729 495h0M746.5 484.5h0"/><path stroke="#00BE67" d="M699.5 500.5h0M699.5 504.5h0M692.5 498h0M696 508.5h0M697 492h0M682.5 507.5h0M688 505.5h0M726 496h0M688.5 500.5h0M704.5 493h0M684 501h0M700.5 504.5h0"/><path stroke="#00BFC4" d="M695.5 505h0M712.5 500.5h0M697.5 499h0M679 510.5h0M700 499h0M687 503h0M700 496.5h0M694 502h0"/><path stroke="#CD9600" d="M718 501.5h0M719 506h0M719.5 506h0M719 500.5h0M704 502h0M737 496h0M736 489h0M718 496.5h0M734 493.5h0M723 500h0M722 506h0M722.5 502h0M732 488.5h0M728.5 493.5h0M775.5 496h0M733.5 504h0M694 500.5h0M737 498.5h0M745 492h0M722.5 495h0M725 501h0M724 502h0"/><path stroke="#FF61CC" d="M680 493h0M679 497.5h0M647.5 511h0M661.5 498h0"/><path stroke="#00A9FF" d="M682.5 497h0M684.5 500.5h0M668.5 497h0M654.5 497.5h0M686.5 492.5h0M663.5 495.5h0M683 502h0M685 491.5h0"/><path stroke="#C77CFF" d="M669 497.5h0M660 491h0M646.5 485h0M665 492.5h0M647.5 492h0M684.5 504h0M686 494.5h0M661.5 495h0"/><path stroke="#C77CFF" d="M666.5 492h0M662.5 496.5h0M653.5 492.5h0M679 500h0M676 485.5h0M654.5 491h0M688.5 491h0M651 487h0M675 496h0M660.5 500.5h0M691 493.5h0M669.5 473h0M687.5 498.5h0"/><path stroke="#7CAE00" d="M718 494h0M721.5 500.5h0M707.5 500h0M683 503h0M682.5 501.5h0M740.5 493h0M719.5 497.5h0M719.5 505.5h0"/><path stroke="#FF61CC" d="M654.5 493h0M648 494h0M663 482.5h0M653 497h0M647 484.5h0M649 499h0M671.5 480.5h0"/><path stroke="#00BFC4" d="M684.5 492h0M694 486h0M691.5 486.5h0M716 485.5h0M691.5 488.5h0M681.5 480.5h0M681.5 482.5h0M682.5 499h0M692.5 480h0M682.5 499.5h0"/><path stroke="#00A9FF" d="M697.5 496.5h0M688 507h0M706.5 502.5h0M696.5 490.5h0M678.5 490.5h0M687.5 500h0M690 492.5h0M669.5 492h0M679.5 488h0M671.5 493.5h0M702.5 492.5h0M657 496h0"/><path stroke="#00BE67" d="M682.5 496.5h0M691 501h0M709 492h0M747 494.5h0M718 493.5h0M693.5 494h0M699 491h0M718.5 498h0M708 491.5h0"/><path stroke="#CD9600" d="M733.5 493.5h0M721 509h0M718.5 504h0M720 500h0M735.5 504.5h0M740 495.5h0M719 502h0M735.5 491h0M733.5 487h0M738.5 492h0M734.5 493h0M742.5 495h0M719 494.5h0M718.5 496.5h0M772 489.5h0"/><path stroke="#CD9600" d="M729 488h0M718.5 493h0M728 487.5h0M793 491h0M730 489.5h0M741 476h0M699 489.5h0M720.5 497.5h0M733.5 499.5h0M728.5 488.5h0M742 486.5h0M740.5 481h0M724.5 493h0M745 496h0M719 493.5h0M737.5 492h0"/><path stroke="#00A9FF" d="M677.5 494h0M676.5 491h0M650.5 496h0M673 487h0M708.5 481h0M684 491.5h0M701 500.5h0M688 485h0M658 490.5h0M679.5 495.5h0"/><path stroke="#C77CFF" d="M647 496.5h0M680 483.5h0M657.5 491h0M677.5 492.5h0M692.5 490h0M683 498h0"/><path stroke="#00BE67" d="M688 490.5h0M710 478.5h0M701.5 496.5h0M694 488h0M703 485.5h0M697.5 492.5h0M694.5 499h0M673.5 482.5h0M707 497h0M697 494h0M720.5 496h0"/><path stroke="#00BFC4" d="M705.5 484.5h0M704.5 484.5h0M689.5 508.5h0M692 489.5h0M701 493h0M704 487h0M685 493.5h0M702 492.5h0M702.5 487.5h0M689 493.5h0M681.5 489.5h0M688.5 502.5h0M662.5 492h0M707 494.5h0M698.5 485.5h0M687.5 496h0"/><path stroke="#FF61CC" d="M660.5 490h0M649 482.5h0M673.5 480h0"/><path stroke="#7CAE00" d="M687.5 496.5h0M720.5 504.5h0M724 493.5h0M711.5 479h0M738.5 498h0M742.5 491h0M725.5 476.5h0M714 484h0M683 493.5h0M721 494h0M684 495h0M736 485h0"/><path stroke="#CD9600" d="M719 499.5h0M741 483h0M738.5 486.5h0M729.5 491h0M753 484.5h0M733.5 484.5h0M736 491h0M725.5 481.5h0M722 492h0M736.5 493h0M737 499h0M723.5 489.5h0M722.5 482h0M741 485h0M718 474h0M724 484h0M757 471h0M700.5 489.5h0M729 490h0M720.5 489.5h0"/><path stroke="#C77CFF" d="M664.5 485.5h0M676 479.5h0M679 486h0M668 492h0"/><path stroke="#FF61CC" d="M647 491h0M652 489h0M659.5 483h0M669.5 489.5h0M654 492.5h0M647 489.5h0M650 487h0"/><path stroke="#00BE67" d="M725.5 472.5h0M708 486h0M706 500.5h0M682.5 508.5h0M707.5 490h0M704 488h0M737.5 492.5h0M710.5 495.5h0M707.5 489h0M703 496h0M727 491h0M702.5 492h0"/><path stroke="#00A9FF" d="M695 480h0M679.5 491h0M680.5 484h0M697.5 491.5h0M664 491.5h0M672 489.5h0M704.5 484h0M653 489.5h0M681.5 476.5h0M682.5 485h0M668.5 491h0M689 487.5h0M683 484.5h0"/><path stroke="#7CAE00" d="M725 491h0M693.5 490.5h0M726 493h0M720.5 491.5h0M693 492h0M702 498.5h0M695.5 497.5h0M719 493h0"/><path stroke="#00BFC4" d="M690.5 493.5h0M683.5 495h0M685.5 497h0M683.5 498h0M701.5 495.5h0M693 497.5h0M694 495h0M699.5 483h0M697 482h0M704.5 489.5h0"/><path stroke="#C77CFF" d="M691 484.5h0M646.5 489h0M649.5 485h0M669.5 480.5h0M663 480h0"/><path stroke="#00BFC4" d="M699 480h0M696.5 484h0M712 480.5h0M682 478.5h0M683 495.5h0M711.5 490h0M684 484.5h0M686 481h0M702 490h0M696 478.5h0M709 474.5h0M686.5 488h0"/><path stroke="#FF61CC" d="M664.5 488h0M664 487.5h0M662 489.5h0"/><path stroke="#00A9FF" d="M701 485h0M688 490h0M682 488h0M702.5 476h0M663 486.5h0"/><path stroke="#00BE67" d="M709 486h0M696 488h0M696.5 481h0M709.5 483h0M710 472.5h0M685.5 490h0M689.5 483h0M709.5 489.5h0M687.5 483h0M687.5 486.5h0M718.5 489.5h0M682.5 492h0M684.5 487.5h0M690 488.5h0M714 479.5h0"/><path stroke="#CD9600" d="M720 490h0M732.5 484h0M730 489h0M719 489.5h0M745 485h0M718.5 492.5h0M743.5 478.5h0M733 481h0M730 482.5h0M745.5 480.5h0M736.5 491.5h0M726 478h0M724 484.5h0M721.5 483h0M733.5 486.5h0M727.5 485h0M744 470h0M727 482.5h0M739.5 481.5h0M718 487.5h0M737 476.5h0M737.5 480h0"/><path stroke="#7CAE00" d="M741 481.5h0M723.5 486.5h0M730 482h0M697 466h0M727 492.5h0M686 486h0M718 491.5h0M740.5 483.5h0M728.5 479h0M730 478h0M736 482h0M694.5 487.5h0"/><path stroke="#CD9600" d="M744 489.5h0M748 470h0M726 488h0M728.5 476h0M745.5 478h0M722 484.5h0M727 480.5h0M741 478.5h0M731 478h0M744 477.5h0M727 500.5h0M730.5 488h0M727.5 481.5h0M791 481h0M730 480h0M724 489.5h0M734.5 481.5h0M734.5 478h0M755 478.5h0M717.5 489h0M742 473h0M724.5 474.5h0M728.5 481h0"/><path stroke="#00BE67" d="M694 477h0M683 491h0M715.5 471h0M735.5 473h0M732.5 476.5h0M701.5 482.5h0M688 484.5h0M720 486h0M702 473h0M684.5 477.5h0"/><path stroke="#FF61CC" d="M648.5 475.5h0M648 486.5h0M647.5 472.5h0M682.5 474h0M647.5 473.5h0"/><path stroke="#00A9FF" d="M687 488h0M681.5 461.5h0M672.5 473.5h0M701.5 476h0M711.5 480.5h0M668 473.5h0M698 482h0M678 486.5h0M686 480.5h0M701 480h0"/><path stroke="#7CAE00" d="M730.5 478h0M738 477h0M723 479.5h0M681.5 486.5h0M729.5 475.5h0M733.5 480.5h0M709 470h0M682.5 494h0M728 471.5h0M718 465h0M739 481h0M748.5 472.5h0"/><path stroke="#C77CFF" d="M654 474.5h0M673.5 488h0M647.5 482.5h0M651.5 482h0M664.5 483.5h0M673 485h0"/><path stroke="#00BFC4" d="M700 488.5h0M687.5 464.5h0M706.5 472.5h0M703.5 481.5h0M698 481.5h0M689.5 482h0M702.5 483h0M704 477h0"/><path stroke="#00A9FF" d="M658 475.5h0M691.5 468.5h0M697.5 471.5h0M684.5 483.5h0M704.5 469.5h0M706.5 470h0"/><path stroke="#CD9600" d="M753.5 482h0M723 488.5h0M748.5 475h0M734 478h0M732.5 479.5h0M721.5 485h0M745 474h0M738.5 474h0M737 486.5h0M741.5 474h0M742.5 486.5h0M721 488h0M718 484.5h0M738 476h0M724 476.5h0M742.5 471h0M721.5 483.5h0M727.5 483h0M751.5 484.5h0M757.5 468.5h0M718 482.5h0M735 479.5h0M734.5 479.5h0M730.5 474.5h0M718 479h0M740 469h0M718 477h0M733 473.5h0M726 478.5h0M758 468h0M732 476h0M719 482h0"/><path stroke="#7CAE00" d="M747.5 475h0M718.5 466h0M726 487h0M751.5 475h0M746 482.5h0M725 480h0M709.5 476.5h0M718.5 475.5h0M718 471h0"/><path stroke="#C77CFF" d="M667.5 476h0M670 476.5h0M693.5 478.5h0M705 473.5h0M694.5 464.5h0M668 458.5h0"/><path stroke="#F8766D" d="M819 482h0"/><path stroke="#00BE67" d="M726 473h0M682.5 480h0M683.5 484h0M708 475h0M700.5 481.5h0M701.5 478h0M704 461.5h0"/><path stroke="#00BFC4" d="M700.5 482h0M685 480h0M685 481h0M688 477h0M685 476h0M692.5 474h0M699 486.5h0M682.5 478.5h0M690.5 476h0M695.5 474h0M681.5 468.5h0"/><path stroke="#FF61CC" d="M648.5 485.5h0M648 477.5h0"/><path stroke="#FF61CC" d="M648.5 469.5h0M663 467.5h0M648 468.5h0"/><path stroke="#00BFC4" d="M690 471h0M689.5 471.5h0M695.5 485h0M689 471.5h0M687 472h0M682.5 470.5h0M684.5 472.5h0M685.5 484.5h0M691 478.5h0M704.5 476h0M688 479h0M697.5 478.5h0M684.5 469h0M696.5 468.5h0M682.5 477.5h0M702.5 461.5h0M684.5 473.5h0M698.5 477h0"/><path stroke="#C77CFF" d="M662.5 469h0M684.5 474.5h0M687.5 476h0M699.5 475h0"/><path stroke="#00A9FF" d="M693.5 472h0M688.5 474.5h0M699.5 471h0M687.5 474h0M707.5 480h0M689.5 480h0M682.5 481.5h0M692 480h0M683 472h0M682.5 466h0M686.5 467.5h0M709.5 477.5h0M671.5 476h0M683 480.5h0M698 472.5h0"/><path stroke="#CD9600" d="M743.5 475h0M735.5 472h0M752 474.5h0M753.5 464.5h0M721.5 480h0M724 478h0M742 460h0M720.5 482.5h0M722 479h0M721 480h0M734 478.5h0M740 480.5h0M729.5 472h0M747.5 474.5h0M771 465h0"/><path stroke="#F8766D" d="M791 474h0"/><path stroke="#00BE67" d="M700.5 474h0M684 477.5h0M713.5 466h0M712 475h0M689.5 468.5h0M693.5 474.5h0M699 473h0M722 475h0"/><path stroke="#7CAE00" d="M722 484h0M741 475h0M731 469.5h0M738.5 471h0M719 480h0M688 468.5h0M718 461h0M728.5 469h0M718 475.5h0M737.5 473h0"/><path stroke="#00A9FF" d="M693 460.5h0M694 462.5h0M675.5 464.5h0M707 467h0"/><path stroke="#FF61CC" d="M646.5 464h0M655.5 481.5h0M668.5 475.5h0M682.5 469.5h0M675.5 466h0M656 463.5h0M648 467.5h0"/><path stroke="#C77CFF" d="M685 465h0M698 459.5h0M654 454h0M648 471h0M650 477.5h0"/><path stroke="#7CAE00" d="M705.5 468h0M738.5 471.5h0M729 460h0M748 467h0M724.5 473h0M718 473h0M723.5 467.5h0M720.5 472h0M718.5 479h0M730.5 471.5h0M727.5 464.5h0M718.5 469.5h0M737 468.5h0M721.5 478h0M729 468.5h0M732 473.5h0M719 479.5h0M736.5 470.5h0M731 465h0M718 464.5h0"/><path stroke="#00BFC4" d="M684 472h0M702 461h0M730.5 467.5h0M695 467h0M696 461.5h0M701 458.5h0M682.5 469h0M699.5 473.5h0M692.5 464.5h0M718.5 477h0M683 473h0M701 463.5h0"/><path stroke="#00BE67" d="M704.5 472h0M696.5 463h0M709.5 475h0M728 464h0M706.5 468.5h0M682.5 475.5h0"/><path stroke="#CD9600" d="M747 468.5h0M718 468h0M724 471h0M719.5 473h0M729 473h0M723 475h0M748.5 466h0M711 480.5h0M722.5 472.5h0M769 465h0M733.5 479.5h0M733.5 469h0M720.5 479.5h0M741 467.5h0M740.5 462h0M746 472.5h0M758.5 471.5h0M738 467.5h0M755.5 472h0M748 464h0"/><path stroke="#00BE67" d="M726.5 468.5h0M719 469.5h0M709 467.5h0M703 459h0"/><path stroke="#00A9FF" d="M700 468.5h0M700 464.5h0M684.5 467h0M682.5 465.5h0M702 470h0M647.5 459.5h0M689 463h0M684 470h0"/><path stroke="#7CAE00" d="M722 470.5h0M727 458h0M733.5 472h0M718.5 468h0M730 471.5h0M721 467.5h0M707.5 463.5h0M734 467h0M728 466h0M704.5 460.5h0M748.5 467h0M732.5 466h0M718 457h0M727 464.5h0M736 452h0"/><path stroke="#C77CFF" d="M672.5 456.5h0M687 462h0M686.5 463.5h0M648 471.5h0"/><path stroke="#CD9600" d="M729.5 466h0M737 466h0M738 461.5h0M747 463h0M756 453h0M727 468.5h0M737 463h0M722 469h0M725 466.5h0M726.5 473.5h0M734.5 470.5h0M719 471.5h0M752 459h0M740 463h0M735 465h0M733.5 467h0M770 456h0M758.5 466.5h0M735 471h0M745.5 466h0M744.5 475.5h0M747.5 460h0M727 457.5h0M730 465.5h0M719 478.5h0M724 463.5h0M725 462h0M739 461h0M790 468h0M719 466h0M719 464h0"/><path stroke="#FF61CC" d="M651.5 467h0M689.5 466h0M667 457.5h0M649.5 467h0"/><path stroke="#00BFC4" d="M698.5 473.5h0M684 468.5h0M710.5 474.5h0M682.5 457.5h0M699.5 466.5h0M700.5 462h0M718.5 461.5h0M694 457.5h0"/><path stroke="#7CAE00" d="M725.5 455.5h0M698 466.5h0M718.5 468.5h0M733 463.5h0M734 468.5h0M699.5 461h0M723.5 457.5h0M719.5 465h0M735 449h0M740 459h0M745.5 460.5h0M720 460h0M733.5 456h0M718.5 460.5h0M739.5 456h0M732.5 461.5h0"/><path stroke="#CD9600" d="M741.5 460h0M730.5 460.5h0M758.5 453.5h0M759.5 459.5h0M732 462.5h0M759.5 463h0M750 450h0M758.5 454h0M719.5 466.5h0M791 449h0M740 465h0M735 457h0M745.5 459h0M748.5 456h0M745 451h0M734.5 460.5h0M735 462h0M744 462.5h0M751.5 457h0M748 457h0"/><path stroke="#FF61CC" d="M655 461.5h0M692 472h0M666 453.5h0"/><path stroke="#C77CFF" d="M695.5 458h0M698 455.5h0M661.5 449.5h0"/><path stroke="#00A9FF" d="M683 458h0M700 458.5h0M708 464.5h0M682.5 461.5h0M701 464.5h0M684 465h0M705.5 451h0M703.5 454h0M685 462.5h0M682 464.5h0M685 461.5h0M711 462.5h0M687.5 454.5h0"/><path stroke="#00BFC4" d="M683 468.5h0M720 462h0M686.5 461h0M703.5 457h0M687 463h0M697 456.5h0M700.5 451.5h0M683.5 462.5h0M724.5 461h0M685.5 446.5h0M709.5 447.5h0"/><path stroke="#00BE67" d="M720.5 468.5h0M718 459h0M709 460h0M718.5 458.5h0M687.5 458h0M724 457h0M723.5 454.5h0M692 460h0"/><path stroke="#FF61CC" d="M707 453h0M671 459.5h0M687 457.5h0M649.5 450h0M676.5 453h0"/><path stroke="#00BFC4" d="M683.5 458h0M682.5 453h0M702.5 467h0M683 461.5h0M684.5 458.5h0M718.5 459h0M702.5 458h0M725.5 454h0M736.5 452.5h0M717 454h0M705 445h0M723.5 450h0"/><path stroke="#00BE67" d="M730.5 459h0M728.5 450h0M737 458.5h0"/><path stroke="#CD9600" d="M720 468.5h0M754.5 462h0M745 455h0M751.5 460.5h0M723.5 469.5h0M751.5 452.5h0M729 443.5h0M742 453h0M725.5 444h0M749.5 453.5h0M755 455h0M730.5 454.5h0M745.5 452h0M732 460.5h0M728 456h0M744.5 451.5h0M736.5 455h0M731 456h0M720.5 459h0M720 457h0"/><path stroke="#C77CFF" d="M696.5 470h0M683.5 456.5h0M663.5 446h0M685 455h0"/><path stroke="#7CAE00" d="M742 458.5h0M719 460.5h0M738.5 455.5h0M740 462.5h0M740.5 452.5h0M735.5 453.5h0M732.5 459.5h0M719 462h0M751 459.5h0M718 446h0M719 459h0M722 454.5h0M722 464.5h0M739 452.5h0M732.5 456h0M735.5 456h0"/><path stroke="#00A9FF" d="M692 448h0M689.5 458.5h0M683 452h0M684 460h0M682.5 454h0M708.5 461.5h0M687 446.5h0M683.5 453.5h0M703.5 447h0M697 462h0M686.5 462h0M683.5 452.5h0M693 456h0M701 454h0"/><path stroke="#CD9600" d="M718.5 453.5h0M749.5 453h0M723.5 461h0M741.5 455.5h0M737 465.5h0M730 449h0M755.5 448h0M734 454.5h0M745 453.5h0M731 458h0M755 444h0M737.5 441h0"/><path stroke="#00BFC4" d="M710.5 442.5h0M689.5 457.5h0M695.5 453.5h0M692 454.5h0M690 453.5h0M701.5 451.5h0M688 448h0"/><path stroke="#7CAE00" d="M722 457h0M729.5 449.5h0M752 447.5h0M720 466h0M724.5 461.5h0M746.5 453h0M720 463h0M729 446.5h0M729 457h0M745 454h0M724 445.5h0M724 453h0M747 441h0M739 451.5h0M718 450.5h0M735 448.5h0M718 448h0M732.5 447h0M718 455.5h0M725.5 458.5h0M737 452.5h0M727.5 446.5h0"/><path stroke="#C77CFF" d="M682.5 444.5h0M684 455h0M683 455h0M657 446h0M694 450.5h0"/><path stroke="#FF61CC" d="M658 446h0M682.5 455.5h0M702.5 449h0M681.5 443.5h0M659.5 453h0M683 456h0M683 451h0"/><path stroke="#00A9FF" d="M683 445.5h0M663 448h0M700.5 452.5h0M669.5 455h0M696 452h0M689 447h0M692.5 448.5h0M683 443h0M696.5 446.5h0"/><path stroke="#00BE67" d="M684.5 443.5h0M689.5 457h0M720 459h0M707.5 458.5h0M722 454h0M724 447h0M744.5 447h0M730 451.5h0M719 453.5h0M741 459h0M718.5 450h0M726 451.5h0"/><path stroke="#C77CFF" d="M687 444h0M675.5 454h0M689.5 442.5h0M682.5 450h0M686 442h0"/><path stroke="#00BFC4" d="M697.5 448h0M692 444h0M739.5 441.5h0M721.5 453.5h0M684.5 449.5h0M689 445.5h0"/><path stroke="#00BE67" d="M735.5 441.5h0M718 443.5h0M725.5 442.5h0M720 455.5h0M737 444h0M725 442.5h0M826.5 443h0M700 452h0M719 446h0M682.5 446.5h0"/><path stroke="#FF61CC" d="M692.5 446.5h0M676.5 442.5h0M683.5 447.5h0M654.5 444h0M661.5 442.5h0"/><path stroke="#7CAE00" d="M743 442h0M743.5 448.5h0M729.5 447.5h0M753.5 441.5h0M736 455h0M732 451h0M746 448h0M722.5 442h0M719.5 452h0M726 446h0M712 446.5h0M728 454.5h0M723.5 451h0M745.5 443.5h0M739.5 448h0M719 450.5h0M722 447.5h0M746 443.5h0M736 443h0M729 442h0M722 442h0M721.5 445.5h0M735.5 445.5h0"/><path stroke="#00A9FF" d="M684 452h0M698.5 445h0M692 447h0M705 450.5h0M687.5 451.5h0M687.5 448h0M705.5 442h0"/><path stroke="#CD9600" d="M720.5 441h0M724 442h0M737 455.5h0M733.5 453.5h0M749 446h0M734 449h0M719 448h0M747.5 441.5h0M724.5 447.5h0M742 446h0M741.5 452h0M727 448.5h0M738 449h0M719.5 447.5h0M729.5 443.5h0M792 444.5h0M719 450h0M694.5 444.5h0"/><path stroke="#C77CFF" d="M698 449h0M692 446.5h0M684.5 448h0M685 441.5h0M697 443.5h0M682.5 441h0M650 441h0"/><path stroke="#00BE67" d="M694.5 446.5h0M728.5 442.5h0M733.5 447h0M719.5 441.5h0M718 444.5h0M722 444.5h0M720 443.5h0M751.5 441.5h0M718.5 444.5h0"/><path stroke="#7CAE00" d="M718.5 442h0M735.5 444h0M742 450.5h0M721.5 450.5h0M719 441h0M742 447h0M731.5 444h0M719 445h0M735.5 444.5h0M733 443.5h0M739.5 444h0M718 445h0"/><path stroke="#00BFC4" d="M682.5 445.5h0M719.5 455.5h0M683.5 441.5h0M699 442h0M699.5 445.5h0"/><path stroke="#00A9FF" d="M709.5 442.5h0M698.5 441.5h0M695 449h0M720 449h0M683.5 441h0M687.5 446h0M697.5 451h0M698.5 442h0M697 442.5h0"/><path stroke="#FF61CC" d="M685 448h0M693.5 441.5h0M686 441.5h0"/><path stroke="#CD9600" d="M746.5 446h0M739.5 444.5h0M720 442h0M741.5 450h0M740.5 443h0M720.5 445h0M775.5 441h0M747 445h0M750.5 445.5h0M750 443.5h0M752 446.5h0M737.5 446.5h0M719.5 449.5h0M719 441.5h0M744 444h0M791.5 442.5h0"/></g>
<path d="M574.7 722v5M610.6 722v5M646.5 722v5M682.4 722v5M718.3 722v5M754.2 722v5M790.1 722v5M826.0 722v5M575 715.6h-4M575 642.6h-4M575 569.6h-4M575 496.6h-4" stroke="#666" stroke-width="1" fill="none"/>
<g font-size="10.3" fill="#7c7c7c">
<text x="574.7" y="739" text-anchor="middle">0.0</text>
<text x="610.6" y="739" text-anchor="middle">0.5</text>
<text x="646.5" y="739" text-anchor="middle">1.0</text>
<text x="682.4" y="739" text-anchor="middle">1.5</text>
<text x="718.3" y="739" text-anchor="middle">2.0</text>
<text x="754.2" y="739" text-anchor="middle">2.5</text>
<text x="790.1" y="739" text-anchor="middle">3.0</text>
<text x="826.0" y="739" text-anchor="middle">3.5</text>
<text x="567" y="719.4" text-anchor="end">0</text>
<text x="567" y="646.4" text-anchor="end">5000</text>
<text x="567" y="573.4" text-anchor="end">10000</text>
<text x="567" y="500.4" text-anchor="end">15000</text>
</g>
<text x="711" y="418" font-size="22.6" text-anchor="middle" fill="#000">Diamond Pricing</text>
<text x="494.2" y="582.8" font-size="16.3" fill="#000">Price</text>
<text x="715.5" y="760.5" font-size="15.8" text-anchor="middle" fill="#000">Carat</text>
<text x="843" y="485.5" font-size="12" fill="#000">Clarity</text>
<rect x="844" y="492" width="22" height="183" fill="#f2f2f2"/>
<circle cx="854" cy="502.2" r="1.95" fill="#F8766D"/>
<text x="869.6" y="506.7" font-size="10.6" fill="#000">I1</text>
<rect x="844" y="514.1" width="22" height="1.6" fill="#fff"/>
<circle cx="854" cy="525.3" r="1.95" fill="#CD9600"/>
<text x="869.6" y="529.8" font-size="10.6" fill="#000">SI2</text>
<rect x="844" y="537.0" width="22" height="1.6" fill="#fff"/>
<circle cx="854" cy="548.4" r="1.95" fill="#7CAE00"/>
<text x="869.6" y="552.9" font-size="10.6" fill="#000">SI1</text>
<rect x="844" y="559.9" width="22" height="1.6" fill="#fff"/>
<circle cx="854" cy="571.5" r="1.95" fill="#00BE67"/>
<text x="869.6" y="576.0" font-size="10.6" fill="#000">VS2</text>
<rect x="844" y="582.8" width="22" height="1.6" fill="#fff"/>
<circle cx="854" cy="594.6" r="1.95" fill="#00BFC4"/>
<text x="869.6" y="599.1" font-size="10.6" fill="#000">VS1</text>
<rect x="844" y="605.7" width="22" height="1.6" fill="#fff"/>
<circle cx="854" cy="617.7" r="1.95" fill="#00A9FF"/>
<text x="869.6" y="622.2" font-size="10.6" fill="#000">VVS2</text>
<rect x="844" y="628.6" width="22" height="1.6" fill="#fff"/>
<circle cx="854" cy="640.8" r="1.95" fill="#C77CFF"/>
<text x="869.6" y="645.3" font-size="10.6" fill="#000">VVS1</text>
<rect x="844" y="651.5" width="22" height="1.6" fill="#fff"/>
<circle cx="854" cy="663.9" r="1.95" fill="#FF61CC"/>
<text x="869.6" y="668.4" font-size="10.6" fill="#000">IF</text>
</svg><!--PLOTEND-->
</body></html>
